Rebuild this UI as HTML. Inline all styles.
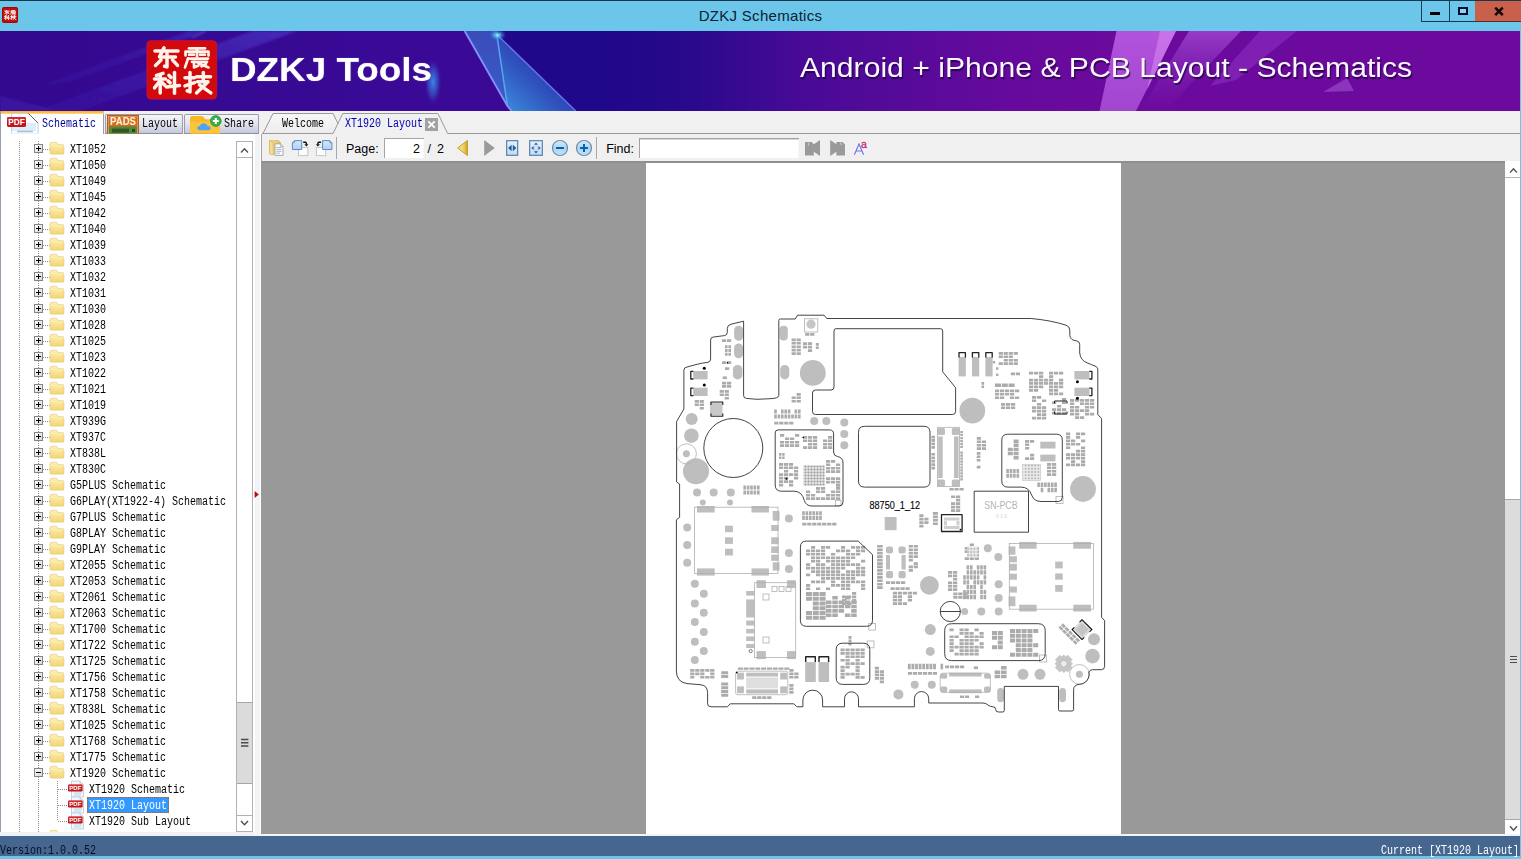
<!DOCTYPE html>
<html>
<head>
<meta charset="utf-8">
<title>DZKJ Schematics</title>
<style>

*{box-sizing:border-box;margin:0;padding:0}
html,body{width:1521px;height:859px;overflow:hidden;background:#6bc6ea;font-family:"Liberation Sans",sans-serif}
#app{position:absolute;left:0;top:0;width:1521px;height:859px;overflow:hidden;background:#6bc6ea}
.abs{position:absolute}
svg{position:absolute;overflow:visible}
/* SimSun-like condensed mono text: 6px per char */
.ss{position:absolute;font-family:"Liberation Mono",monospace;font-size:12px;line-height:16px;height:16px;white-space:pre;transform:scaleX(.8333);transform-origin:0 0;color:#000;margin-top:1.4px}
.ui{position:absolute;font-family:"Liberation Sans",sans-serif;font-size:12.5px;line-height:14px;white-space:pre;color:#000}
#topline{left:0;top:0;width:1521px;height:1px;background:#17384f}
#title{left:0;top:1px;width:1521px;height:30px;background:#6bc6ea}
#title .cap{position:absolute;left:0;width:1521px;top:6px;text-align:center;font-size:15px;line-height:18px;color:#0b2236;letter-spacing:.3px}
#banner{left:0;top:31px;width:1520px;height:80px;overflow:hidden;background:linear-gradient(90deg,#33098f 0,#380a94 20%,#3a0a96 27.6%,#20088a 29%,#1f088a 36%,#22088a 42%,#2b098d 46%,#3c0a93 50%,#470a96 52.6%,#560a9a 59.2%,#640a9c 65.8%,#6b0a9d 72.4%,#6b0a9d 100%)}
#tabrow{left:0;top:111px;width:1520px;height:23px;background:#f0f0f0}
#main{left:0;top:134px;width:1520px;height:702px;background:#f0f0f0}
#status{left:0;top:836px;width:1520px;height:20px;background:#45678f}
.ltab{position:absolute;top:114px;height:20px;border:1px solid #9c9cac;border-bottom:1px solid #8e8e9c;border-radius:2px 2px 0 0;background:linear-gradient(180deg,#f6f6fa 0,#e4e5ee 45%,#c6c9dc 100%)}
#tree{left:0;top:134px;width:254px;height:698px;background:#fff;overflow:hidden;border-left:1px solid #9c9cac}
.sel{position:absolute;background:#3399ff;outline:1px dotted #c06000;outline-offset:-1px}

</style>
</head>
<body>
<div id="app">
<svg width="0" height="0" style="position:absolute"><defs>
<symbol id="zh" viewBox="0 0 58 46" overflow="visible">
 <g fill="none" stroke="#fff4ec" stroke-width="3.5" stroke-linecap="round" stroke-linejoin="round">
  <!-- dong -->
  <g transform="translate(0,0)">
   <path d="M2,3.5H25"/><path d="M11,0.5L6.5,9.5H22.5"/><path d="M14,6V19.5L11.5,18.8"/><path d="M8,12.5L2.5,18"/><path d="M19.5,12.5L24.5,18"/>
  </g>
  <!-- zhen -->
  <g transform="translate(31,0)" stroke-width="2.7">
   <path d="M5,1H21"/><path d="M1.5,8V4.3H24.5V8"/><path d="M13,1V9"/><path d="M5,7.3H10M16,7.3H21"/>
   <path d="M4,11.2H24"/><path d="M4,11.2L1,20"/><path d="M8,14.4H23"/><path d="M10,14.4V20L14.5,18"/><path d="M14,15.5L24.5,20"/><path d="M22,16.4L17.5,19"/>
  </g>
  <!-- ke -->
  <g transform="translate(0,25)">
   <path d="M10,1L3.5,3"/><path d="M1.5,6.5H12.5"/><path d="M7.2,3V20.5"/><path d="M7,8.5L1.5,15.5"/><path d="M8.5,9.5L12,13"/>
   <path d="M16,3L18,5"/><path d="M15,8.5L17.2,10.5"/><path d="M13.5,14.5L26.5,13.2"/><path d="M21.5,0V20.8"/>
  </g>
  <!-- ji -->
  <g transform="translate(31,25)">
   <path d="M1,5.3H10.5"/><path d="M6,0V19.5L3.2,18.5"/><path d="M1,13.5L10.5,10.2"/>
   <path d="M12.5,4.3H26.5"/><path d="M19.3,0V8.5"/><path d="M13.5,9.3H24L12.5,20.5"/><path d="M15.5,12.5L26.8,20.5"/>
  </g>
 </g>
</symbol>
</defs></svg>
<div id="topline" class="abs"></div>
<div id="title" class="abs"><div class="cap">DZKJ Schematics</div></div>
<svg width="0" height="0" style="position:absolute"><defs>
<symbol id="zhs" viewBox="0 0 58 46" overflow="visible">
 <g fill="none" stroke="#ffffff" stroke-width="4.3" stroke-linecap="round" stroke-linejoin="round">
  <!-- dong -->
  <g transform="translate(0,0)">
   <path d="M2,3.5H25"/><path d="M11,0.5L6.5,9.5H22.5"/><path d="M14,6V19.5L11.5,18.8"/><path d="M8,12.5L2.5,18"/><path d="M19.5,12.5L24.5,18"/>
  </g>
  <!-- zhen -->
  <g transform="translate(31,0)" stroke-width="3.4">
   <path d="M5,1H21"/><path d="M1.5,8V4.3H24.5V8"/><path d="M13,1V9"/><path d="M5,7.3H10M16,7.3H21"/>
   <path d="M4,11.2H24"/><path d="M4,11.2L1,20"/><path d="M8,14.4H23"/><path d="M10,14.4V20L14.5,18"/><path d="M14,15.5L24.5,20"/><path d="M22,16.4L17.5,19"/>
  </g>
  <!-- ke -->
  <g transform="translate(0,25)">
   <path d="M10,1L3.5,3"/><path d="M1.5,6.5H12.5"/><path d="M7.2,3V20.5"/><path d="M7,8.5L1.5,15.5"/><path d="M8.5,9.5L12,13"/>
   <path d="M16,3L18,5"/><path d="M15,8.5L17.2,10.5"/><path d="M13.5,14.5L26.5,13.2"/><path d="M21.5,0V20.8"/>
  </g>
  <!-- ji -->
  <g transform="translate(31,25)">
   <path d="M1,5.3H10.5"/><path d="M6,0V19.5L3.2,18.5"/><path d="M1,13.5L10.5,10.2"/>
   <path d="M12.5,4.3H26.5"/><path d="M19.3,0V8.5"/><path d="M13.5,9.3H24L12.5,20.5"/><path d="M15.5,12.5L26.8,20.5"/>
  </g>
 </g>
</symbol>
</defs></svg>
<svg style="left:2px;top:7px" width="17" height="17" viewBox="0 0 17 17">
<rect x="0" y="0" width="16" height="16" rx="2.2" fill="#c20d0d"/>
<rect x="0.5" y="0.5" width="15" height="15" rx="2" fill="none" stroke="#9c0707" stroke-width="1"/>
<use href="#zhs" x="2.2" y="1.9" width="11.8" height="12.2" preserveAspectRatio="none"/>
</svg>
<svg style="left:1421px;top:1px" width="100" height="22" viewBox="0 0 100 22" shape-rendering="crispEdges">
<rect x="54" y="0" width="46" height="21" fill="#c9604c"/>
<rect x="54" y="20" width="46" height="1" fill="#5a2a28"/>
<path d="M0.5,0V20.5H54" fill="none" stroke="#123a55" stroke-width="1"/>
<path d="M28.5,0V20.5" fill="none" stroke="#123a55" stroke-width="1"/>
<rect x="9" y="11" width="10" height="3" fill="#000"/>
<rect x="38" y="7" width="8" height="6" fill="#8fd3ee" stroke="#050d33" stroke-width="2"/>
<g shape-rendering="auto"><path d="M74.2,6.6L81.8,14.2M81.8,6.6L74.2,14.2" stroke="#120606" stroke-width="2.6" fill="none"/></g>
</svg>
<div id="banner" class="abs">
<svg style="left:0;top:0" width="1520" height="80" viewBox="0 31 1520 80">
<defs>
 <linearGradient id="bgA" x1="0" y1="0" x2="0" y2="1"><stop offset="0" stop-color="#4f84e0" stop-opacity=".55"/><stop offset="1" stop-color="#3f7ad8" stop-opacity=".75"/></linearGradient>
 <linearGradient id="bgB" x1="1" y1="0" x2="0" y2="1"><stop offset="0" stop-color="#2a3cb8" stop-opacity=".35"/><stop offset=".6" stop-color="#3468cc" stop-opacity=".8"/><stop offset="1" stop-color="#3d98e4" stop-opacity="1"/></linearGradient>
 <linearGradient id="pgA" x1="0" y1="0" x2="0" y2="1"><stop offset="0" stop-color="#c060e8" stop-opacity=".85"/><stop offset="1" stop-color="#b35ae0" stop-opacity=".75"/></linearGradient>
 <linearGradient id="pgB" x1="0" y1="0" x2="0" y2="1"><stop offset="0" stop-color="#a54bd6" stop-opacity=".75"/><stop offset="1" stop-color="#8a2cc0" stop-opacity="0"/></linearGradient>
 <radialGradient id="glow"><stop offset="0" stop-color="#3b8fe6" stop-opacity=".95"/><stop offset=".55" stop-color="#3570d8" stop-opacity=".5"/><stop offset="1" stop-color="#3a0a96" stop-opacity="0"/></radialGradient>
 <radialGradient id="star"><stop offset="0" stop-color="#a8f4ff" stop-opacity="1"/><stop offset=".35" stop-color="#58c8f0" stop-opacity=".7"/><stop offset="1" stop-color="#2a60c0" stop-opacity="0"/></radialGradient>
 <filter id="bl1"><feGaussianBlur stdDeviation="1.2"/></filter>
 <filter id="bl3"><feGaussianBlur stdDeviation="3"/></filter>
</defs>
<!-- faint streaks upper-left -->
<defs><linearGradient id="stk" x1="1" y1="0" x2="0" y2="1"><stop offset="0" stop-color="#4a34c4" stop-opacity=".75"/><stop offset=".45" stop-color="#4226b6" stop-opacity=".5"/><stop offset="1" stop-color="#3c1cac" stop-opacity=".35"/></linearGradient></defs>
<g filter="url(#bl1)">
 <path d="M252,31H297L81,111H36Z" fill="url(#stk)"/>
 <path d="M189,31H208L70,82L40,86Z" fill="url(#stk)" opacity=".7"/>
 <path d="M192,38L206,31" stroke="#6a5ce0" stroke-width="1.2" opacity=".7"/>
 <path d="M0,96L60,111H0Z" fill="#3f20b0" opacity=".5"/>
</g>
<!-- left shard -->
<path d="M420,31H464.7L511.6,111H420Z" fill="#3a0a96"/>
<path d="M464.5,31H497L507.5,106Z" fill="url(#bgA)"/>
<path d="M497,34.5L576,111H512L507.5,106Z" fill="url(#bgB)"/>
<path d="M464.7,31L507.4,105.9L511.6,111" stroke="#8092fa" stroke-width="1.9" fill="none"/>
<path d="M496.8,34.5L507.4,105.9" stroke="#5da4f0" stroke-width="1.5" fill="none"/>
<path d="M496.8,34.5L575.8,111" stroke="#6670ea" stroke-width="1.5" fill="none"/>
<ellipse cx="497.5" cy="35" rx="9" ry="6" fill="url(#star)"/>
<ellipse cx="433" cy="82" rx="9" ry="24" fill="url(#glow)"/>
<!-- right purple shards -->
<path d="M1116.5,31H1176L1136,111H1099.5Z" fill="url(#pgA)"/>
<path d="M1160,31L1176,31L1147,90Z" fill="#d98af4" opacity=".55"/>
<path d="M1189,31H1241L1165,111H1140Z" fill="url(#pgB)"/>
<path d="M1260,31H1297L1236,80L1210,86Z" fill="#9a3ccc" opacity=".45"/>
<path d="M1323,92L1347,78L1354,91Z" fill="#a050d0" opacity=".6"/>
</svg>
<svg style="left:146px;top:9px" width="72" height="60" viewBox="0 0 72 60">
<rect x=".5" y=".3" width="70.6" height="59.2" rx="4.5" fill="#d30a0c"/>
<rect x="1" y=".8" width="69.6" height="58.2" rx="4" fill="none" stroke="#b0106a" stroke-opacity=".55" stroke-width="1"/>
<use href="#zh" x="7" y="7.4" width="58" height="46"/>
</svg>
<div class="abs" style="left:230px;top:19.5px;font-size:33.5px;line-height:38px;font-weight:bold;color:#fff;white-space:pre;transform:scaleX(1.1);transform-origin:0 0;text-shadow:0 0 1px rgba(255,255,255,.5)">DZKJ Tools</div>
<div class="abs" style="left:799.5px;top:22px;font-size:27px;line-height:31px;color:#fbf7ff;white-space:pre;transform:scaleX(1.116);transform-origin:0 0;text-shadow:1px 2px 1px rgba(30,0,60,.75)">Android + iPhone &amp; PCB Layout - Schematics</div>
</div>
<div id="tabrow" class="abs"></div>
<div class="abs" style="left:0;top:111px;width:104px;height:23px;background:#fff;border-left:1px solid #9c9cac;border-right:1px solid #9c9cac"></div>
<div class="abs" style="left:1px;top:111px;width:103px;height:3px;background:linear-gradient(180deg,#f7b42c,#fbc24a 60%,#fde3a6)"></div>
<div class="ltab" style="left:105px;width:78px"></div>
<div class="ltab" style="left:184px;width:75px"></div>
<div class="ss" style="left:41.5px;top:115px;color:#00009c;">Schematic</div>
<div class="ss" style="left:142px;top:115px;color:#000;">Layout</div>
<div class="ss" style="left:223.5px;top:115px;color:#000;">Share</div>
<svg style="left:0;top:0" width="1521" height="140" viewBox="0 0 1521 140">
<defs><linearGradient id="wtab" x1="0" y1="0" x2="0" y2="1"><stop offset="0" stop-color="#f7f7f7"/><stop offset="1" stop-color="#ececec"/></linearGradient></defs>
<path d="M263,133.5L273,113.5H333L338,123.5L333,133.5Z" fill="url(#wtab)"/>
<path d="M262,133.5H333" stroke="#9a9a9a" fill="none"/>
<path d="M263,133.5L273,113.5H333L338,123.5" stroke="#9a9a9a" fill="none"/>
<path d="M333,133.5L342.8,113.5H438L447.6,133.5H1520" stroke="#9a9a9a" fill="none"/>
<rect x="425" y="118" width="13" height="13" fill="#a2a2a2"/>
<path d="M428.3,121.3L434.7,127.7M434.7,121.3L428.3,127.7" stroke="#fff" stroke-width="1.8" fill="none"/>
</svg>
<div class="ss" style="left:282px;top:115px;color:#000;">Welcome</div>
<div class="ss" style="left:345px;top:115px;color:#0000b4;">XT1920 Layout</div>
<div id="main" class="abs"></div>
<div class="abs" style="left:254px;top:134px;width:7px;height:702px;background:#f1f3f5;border-left:1px solid #fff;border-right:1px solid #fff"></div>
<svg style="left:254px;top:490px" width="6" height="9" viewBox="0 0 6 9"><path d="M0.6,1L4.8,4.5L0.6,8Z" fill="#b01212"/></svg>
<div class="abs" style="left:261px;top:134px;width:1px;height:27px;background:#a3a3a3"></div>
<div class="abs" style="left:261px;top:161px;width:1244px;height:673px;background:#999"></div>
<div class="abs" style="left:261px;top:161px;width:1244px;height:2px;background:#8f8f8f"></div>
<div class="abs" style="left:646px;top:163px;width:475px;height:671px;background:#fff"></div>
<div class="abs" style="left:1505px;top:161px;width:15px;height:673px;background:#fff"></div>
<div class="abs" style="left:1505px;top:177px;width:15px;height:1px;background:#b4b4b4"></div>
<div class="abs" style="left:1505px;top:499px;width:15px;height:321px;background:#dcdcdc;border-top:1px solid #a8a8a8;border-bottom:1px solid #a8a8a8"></div>
<svg style="left:1505px;top:161px" width="15" height="673" viewBox="0 0 15 673">
<path d="M5,11.6L8.5,7.8L12,11.6" stroke="#505050" stroke-width="1.4" fill="none"/>
<path d="M5,665.3L8.5,669.1L12,665.3" stroke="#505050" stroke-width="1.4" fill="none"/>
<path d="M5,495.5H12M5,498.5H12M5,501.5H12" stroke="#4e4e4e" stroke-width="1" fill="none" shape-rendering="crispEdges"/>
</svg>
<div class="abs" style="left:254px;top:834px;width:1266px;height:2px;background:#f4f4f4"></div>
<div class="abs" style="left:0;top:832px;width:254px;height:4px;background:#eef1f5"></div>
<div id="status" class="abs"></div>
<div class="ss" style="left:0px;top:842px;color:#070c26;">Version:1.0.0.52</div>
<div class="ss" style="left:1381px;top:842px;color:#fff;">Current [XT1920 Layout]</div>
<div id="tree" class="abs"></div>
<div class="sel" style="left:87px;top:797px;width:82px;height:16px"></div>
<svg style="left:0;top:0" width="262" height="836" viewBox="0 0 262 836">
<defs><linearGradient id="fg1" x1="0" y1="0" x2="0" y2="1"><stop offset="0" stop-color="#fdf3c6"/><stop offset=".35" stop-color="#f9e598"/><stop offset="1" stop-color="#f4d67a"/></linearGradient><linearGradient id="bx" x1="0" y1="0" x2="1" y2="1"><stop offset="0" stop-color="#fff"/><stop offset="1" stop-color="#d6d6d6"/></linearGradient><clipPath id="tclip"><rect x="1" y="134" width="235" height="698"/></clipPath>
<symbol id="fold" viewBox="0 0 15 13" overflow="visible">
 <path d="M.6,2.2Q.6,.7 2,.7H6.3Q7.4,.7 7.9,1.7L8.6,3H13.2Q14.3,3 14.3,4.2V11.3Q14.3,12.4 13.2,12.4H1.7Q.6,12.4 .6,11.3Z" fill="url(#fg1)" stroke="#e3c56a" stroke-width=".7"/>
 <path d="M.9,4.3H14" stroke="#fff6c8" stroke-width=".8" opacity=".9"/>
</symbol>
<symbol id="pdfi" viewBox="0 0 17 17" overflow="visible">
 <path d="M3.5,.5H12L15.5,4V16.5H3.5Z" fill="#f3f8fd" stroke="#b9c7d6" stroke-width=".8"/>
 <path d="M12,.5V4H15.5" fill="#dfe9f3" stroke="#b9c7d6" stroke-width=".7"/>
 <path d="M6,10.5H14M6,12.5H14M6,14.5H13" stroke="#b5d4ea" stroke-width="1"/>
 <rect x="0" y="4" width="14.6" height="7" rx="1.2" fill="#c8161d"/>
 <rect x="0" y="4" width="14.6" height="2.6" rx="1.2" fill="#e2383e" opacity=".55"/>
 <text x="7.3" y="9.8" font-family="Liberation Sans" font-weight="bold" font-size="6.2" text-anchor="middle" fill="#fff" textLength="12" lengthAdjust="spacingAndGlyphs">PDF</text>
</symbol>
</defs>
<g clip-path="url(#tclip)">
<path d="M19.5,141V832" stroke="#8c8c8c" stroke-width="1" stroke-dasharray="1,1" fill="none" shape-rendering="crispEdges"/>
<path d="M38.5,141V832" stroke="#8c8c8c" stroke-width="1" stroke-dasharray="1,1" fill="none" shape-rendering="crispEdges"/>
<path d="M43,149.5H50" stroke="#8c8c8c" stroke-width="1" stroke-dasharray="1,1" fill="none" shape-rendering="crispEdges"/>
<rect x="34.5" y="144.5" width="8" height="8" fill="url(#bx)" stroke="#848484" stroke-width="1" shape-rendering="crispEdges"/>
<path d="M36,148.5H41M38.5,146V151" stroke="#000" stroke-width="1" shape-rendering="crispEdges"/>
<use href="#fold" x="49.5" y="141.7" width="15" height="13"/>
<path d="M43,165.5H50" stroke="#8c8c8c" stroke-width="1" stroke-dasharray="1,1" fill="none" shape-rendering="crispEdges"/>
<rect x="34.5" y="160.5" width="8" height="8" fill="url(#bx)" stroke="#848484" stroke-width="1" shape-rendering="crispEdges"/>
<path d="M36,164.5H41M38.5,162V167" stroke="#000" stroke-width="1" shape-rendering="crispEdges"/>
<use href="#fold" x="49.5" y="157.7" width="15" height="13"/>
<path d="M43,181.5H50" stroke="#8c8c8c" stroke-width="1" stroke-dasharray="1,1" fill="none" shape-rendering="crispEdges"/>
<rect x="34.5" y="176.5" width="8" height="8" fill="url(#bx)" stroke="#848484" stroke-width="1" shape-rendering="crispEdges"/>
<path d="M36,180.5H41M38.5,178V183" stroke="#000" stroke-width="1" shape-rendering="crispEdges"/>
<use href="#fold" x="49.5" y="173.7" width="15" height="13"/>
<path d="M43,197.5H50" stroke="#8c8c8c" stroke-width="1" stroke-dasharray="1,1" fill="none" shape-rendering="crispEdges"/>
<rect x="34.5" y="192.5" width="8" height="8" fill="url(#bx)" stroke="#848484" stroke-width="1" shape-rendering="crispEdges"/>
<path d="M36,196.5H41M38.5,194V199" stroke="#000" stroke-width="1" shape-rendering="crispEdges"/>
<use href="#fold" x="49.5" y="189.7" width="15" height="13"/>
<path d="M43,213.5H50" stroke="#8c8c8c" stroke-width="1" stroke-dasharray="1,1" fill="none" shape-rendering="crispEdges"/>
<rect x="34.5" y="208.5" width="8" height="8" fill="url(#bx)" stroke="#848484" stroke-width="1" shape-rendering="crispEdges"/>
<path d="M36,212.5H41M38.5,210V215" stroke="#000" stroke-width="1" shape-rendering="crispEdges"/>
<use href="#fold" x="49.5" y="205.7" width="15" height="13"/>
<path d="M43,229.5H50" stroke="#8c8c8c" stroke-width="1" stroke-dasharray="1,1" fill="none" shape-rendering="crispEdges"/>
<rect x="34.5" y="224.5" width="8" height="8" fill="url(#bx)" stroke="#848484" stroke-width="1" shape-rendering="crispEdges"/>
<path d="M36,228.5H41M38.5,226V231" stroke="#000" stroke-width="1" shape-rendering="crispEdges"/>
<use href="#fold" x="49.5" y="221.7" width="15" height="13"/>
<path d="M43,245.5H50" stroke="#8c8c8c" stroke-width="1" stroke-dasharray="1,1" fill="none" shape-rendering="crispEdges"/>
<rect x="34.5" y="240.5" width="8" height="8" fill="url(#bx)" stroke="#848484" stroke-width="1" shape-rendering="crispEdges"/>
<path d="M36,244.5H41M38.5,242V247" stroke="#000" stroke-width="1" shape-rendering="crispEdges"/>
<use href="#fold" x="49.5" y="237.7" width="15" height="13"/>
<path d="M43,261.5H50" stroke="#8c8c8c" stroke-width="1" stroke-dasharray="1,1" fill="none" shape-rendering="crispEdges"/>
<rect x="34.5" y="256.5" width="8" height="8" fill="url(#bx)" stroke="#848484" stroke-width="1" shape-rendering="crispEdges"/>
<path d="M36,260.5H41M38.5,258V263" stroke="#000" stroke-width="1" shape-rendering="crispEdges"/>
<use href="#fold" x="49.5" y="253.7" width="15" height="13"/>
<path d="M43,277.5H50" stroke="#8c8c8c" stroke-width="1" stroke-dasharray="1,1" fill="none" shape-rendering="crispEdges"/>
<rect x="34.5" y="272.5" width="8" height="8" fill="url(#bx)" stroke="#848484" stroke-width="1" shape-rendering="crispEdges"/>
<path d="M36,276.5H41M38.5,274V279" stroke="#000" stroke-width="1" shape-rendering="crispEdges"/>
<use href="#fold" x="49.5" y="269.7" width="15" height="13"/>
<path d="M43,293.5H50" stroke="#8c8c8c" stroke-width="1" stroke-dasharray="1,1" fill="none" shape-rendering="crispEdges"/>
<rect x="34.5" y="288.5" width="8" height="8" fill="url(#bx)" stroke="#848484" stroke-width="1" shape-rendering="crispEdges"/>
<path d="M36,292.5H41M38.5,290V295" stroke="#000" stroke-width="1" shape-rendering="crispEdges"/>
<use href="#fold" x="49.5" y="285.7" width="15" height="13"/>
<path d="M43,309.5H50" stroke="#8c8c8c" stroke-width="1" stroke-dasharray="1,1" fill="none" shape-rendering="crispEdges"/>
<rect x="34.5" y="304.5" width="8" height="8" fill="url(#bx)" stroke="#848484" stroke-width="1" shape-rendering="crispEdges"/>
<path d="M36,308.5H41M38.5,306V311" stroke="#000" stroke-width="1" shape-rendering="crispEdges"/>
<use href="#fold" x="49.5" y="301.7" width="15" height="13"/>
<path d="M43,325.5H50" stroke="#8c8c8c" stroke-width="1" stroke-dasharray="1,1" fill="none" shape-rendering="crispEdges"/>
<rect x="34.5" y="320.5" width="8" height="8" fill="url(#bx)" stroke="#848484" stroke-width="1" shape-rendering="crispEdges"/>
<path d="M36,324.5H41M38.5,322V327" stroke="#000" stroke-width="1" shape-rendering="crispEdges"/>
<use href="#fold" x="49.5" y="317.7" width="15" height="13"/>
<path d="M43,341.5H50" stroke="#8c8c8c" stroke-width="1" stroke-dasharray="1,1" fill="none" shape-rendering="crispEdges"/>
<rect x="34.5" y="336.5" width="8" height="8" fill="url(#bx)" stroke="#848484" stroke-width="1" shape-rendering="crispEdges"/>
<path d="M36,340.5H41M38.5,338V343" stroke="#000" stroke-width="1" shape-rendering="crispEdges"/>
<use href="#fold" x="49.5" y="333.7" width="15" height="13"/>
<path d="M43,357.5H50" stroke="#8c8c8c" stroke-width="1" stroke-dasharray="1,1" fill="none" shape-rendering="crispEdges"/>
<rect x="34.5" y="352.5" width="8" height="8" fill="url(#bx)" stroke="#848484" stroke-width="1" shape-rendering="crispEdges"/>
<path d="M36,356.5H41M38.5,354V359" stroke="#000" stroke-width="1" shape-rendering="crispEdges"/>
<use href="#fold" x="49.5" y="349.7" width="15" height="13"/>
<path d="M43,373.5H50" stroke="#8c8c8c" stroke-width="1" stroke-dasharray="1,1" fill="none" shape-rendering="crispEdges"/>
<rect x="34.5" y="368.5" width="8" height="8" fill="url(#bx)" stroke="#848484" stroke-width="1" shape-rendering="crispEdges"/>
<path d="M36,372.5H41M38.5,370V375" stroke="#000" stroke-width="1" shape-rendering="crispEdges"/>
<use href="#fold" x="49.5" y="365.7" width="15" height="13"/>
<path d="M43,389.5H50" stroke="#8c8c8c" stroke-width="1" stroke-dasharray="1,1" fill="none" shape-rendering="crispEdges"/>
<rect x="34.5" y="384.5" width="8" height="8" fill="url(#bx)" stroke="#848484" stroke-width="1" shape-rendering="crispEdges"/>
<path d="M36,388.5H41M38.5,386V391" stroke="#000" stroke-width="1" shape-rendering="crispEdges"/>
<use href="#fold" x="49.5" y="381.7" width="15" height="13"/>
<path d="M43,405.5H50" stroke="#8c8c8c" stroke-width="1" stroke-dasharray="1,1" fill="none" shape-rendering="crispEdges"/>
<rect x="34.5" y="400.5" width="8" height="8" fill="url(#bx)" stroke="#848484" stroke-width="1" shape-rendering="crispEdges"/>
<path d="M36,404.5H41M38.5,402V407" stroke="#000" stroke-width="1" shape-rendering="crispEdges"/>
<use href="#fold" x="49.5" y="397.7" width="15" height="13"/>
<path d="M43,421.5H50" stroke="#8c8c8c" stroke-width="1" stroke-dasharray="1,1" fill="none" shape-rendering="crispEdges"/>
<rect x="34.5" y="416.5" width="8" height="8" fill="url(#bx)" stroke="#848484" stroke-width="1" shape-rendering="crispEdges"/>
<path d="M36,420.5H41M38.5,418V423" stroke="#000" stroke-width="1" shape-rendering="crispEdges"/>
<use href="#fold" x="49.5" y="413.7" width="15" height="13"/>
<path d="M43,437.5H50" stroke="#8c8c8c" stroke-width="1" stroke-dasharray="1,1" fill="none" shape-rendering="crispEdges"/>
<rect x="34.5" y="432.5" width="8" height="8" fill="url(#bx)" stroke="#848484" stroke-width="1" shape-rendering="crispEdges"/>
<path d="M36,436.5H41M38.5,434V439" stroke="#000" stroke-width="1" shape-rendering="crispEdges"/>
<use href="#fold" x="49.5" y="429.7" width="15" height="13"/>
<path d="M43,453.5H50" stroke="#8c8c8c" stroke-width="1" stroke-dasharray="1,1" fill="none" shape-rendering="crispEdges"/>
<rect x="34.5" y="448.5" width="8" height="8" fill="url(#bx)" stroke="#848484" stroke-width="1" shape-rendering="crispEdges"/>
<path d="M36,452.5H41M38.5,450V455" stroke="#000" stroke-width="1" shape-rendering="crispEdges"/>
<use href="#fold" x="49.5" y="445.7" width="15" height="13"/>
<path d="M43,469.5H50" stroke="#8c8c8c" stroke-width="1" stroke-dasharray="1,1" fill="none" shape-rendering="crispEdges"/>
<rect x="34.5" y="464.5" width="8" height="8" fill="url(#bx)" stroke="#848484" stroke-width="1" shape-rendering="crispEdges"/>
<path d="M36,468.5H41M38.5,466V471" stroke="#000" stroke-width="1" shape-rendering="crispEdges"/>
<use href="#fold" x="49.5" y="461.7" width="15" height="13"/>
<path d="M43,485.5H50" stroke="#8c8c8c" stroke-width="1" stroke-dasharray="1,1" fill="none" shape-rendering="crispEdges"/>
<rect x="34.5" y="480.5" width="8" height="8" fill="url(#bx)" stroke="#848484" stroke-width="1" shape-rendering="crispEdges"/>
<path d="M36,484.5H41M38.5,482V487" stroke="#000" stroke-width="1" shape-rendering="crispEdges"/>
<use href="#fold" x="49.5" y="477.7" width="15" height="13"/>
<path d="M43,501.5H50" stroke="#8c8c8c" stroke-width="1" stroke-dasharray="1,1" fill="none" shape-rendering="crispEdges"/>
<rect x="34.5" y="496.5" width="8" height="8" fill="url(#bx)" stroke="#848484" stroke-width="1" shape-rendering="crispEdges"/>
<path d="M36,500.5H41M38.5,498V503" stroke="#000" stroke-width="1" shape-rendering="crispEdges"/>
<use href="#fold" x="49.5" y="493.7" width="15" height="13"/>
<path d="M43,517.5H50" stroke="#8c8c8c" stroke-width="1" stroke-dasharray="1,1" fill="none" shape-rendering="crispEdges"/>
<rect x="34.5" y="512.5" width="8" height="8" fill="url(#bx)" stroke="#848484" stroke-width="1" shape-rendering="crispEdges"/>
<path d="M36,516.5H41M38.5,514V519" stroke="#000" stroke-width="1" shape-rendering="crispEdges"/>
<use href="#fold" x="49.5" y="509.7" width="15" height="13"/>
<path d="M43,533.5H50" stroke="#8c8c8c" stroke-width="1" stroke-dasharray="1,1" fill="none" shape-rendering="crispEdges"/>
<rect x="34.5" y="528.5" width="8" height="8" fill="url(#bx)" stroke="#848484" stroke-width="1" shape-rendering="crispEdges"/>
<path d="M36,532.5H41M38.5,530V535" stroke="#000" stroke-width="1" shape-rendering="crispEdges"/>
<use href="#fold" x="49.5" y="525.7" width="15" height="13"/>
<path d="M43,549.5H50" stroke="#8c8c8c" stroke-width="1" stroke-dasharray="1,1" fill="none" shape-rendering="crispEdges"/>
<rect x="34.5" y="544.5" width="8" height="8" fill="url(#bx)" stroke="#848484" stroke-width="1" shape-rendering="crispEdges"/>
<path d="M36,548.5H41M38.5,546V551" stroke="#000" stroke-width="1" shape-rendering="crispEdges"/>
<use href="#fold" x="49.5" y="541.7" width="15" height="13"/>
<path d="M43,565.5H50" stroke="#8c8c8c" stroke-width="1" stroke-dasharray="1,1" fill="none" shape-rendering="crispEdges"/>
<rect x="34.5" y="560.5" width="8" height="8" fill="url(#bx)" stroke="#848484" stroke-width="1" shape-rendering="crispEdges"/>
<path d="M36,564.5H41M38.5,562V567" stroke="#000" stroke-width="1" shape-rendering="crispEdges"/>
<use href="#fold" x="49.5" y="557.7" width="15" height="13"/>
<path d="M43,581.5H50" stroke="#8c8c8c" stroke-width="1" stroke-dasharray="1,1" fill="none" shape-rendering="crispEdges"/>
<rect x="34.5" y="576.5" width="8" height="8" fill="url(#bx)" stroke="#848484" stroke-width="1" shape-rendering="crispEdges"/>
<path d="M36,580.5H41M38.5,578V583" stroke="#000" stroke-width="1" shape-rendering="crispEdges"/>
<use href="#fold" x="49.5" y="573.7" width="15" height="13"/>
<path d="M43,597.5H50" stroke="#8c8c8c" stroke-width="1" stroke-dasharray="1,1" fill="none" shape-rendering="crispEdges"/>
<rect x="34.5" y="592.5" width="8" height="8" fill="url(#bx)" stroke="#848484" stroke-width="1" shape-rendering="crispEdges"/>
<path d="M36,596.5H41M38.5,594V599" stroke="#000" stroke-width="1" shape-rendering="crispEdges"/>
<use href="#fold" x="49.5" y="589.7" width="15" height="13"/>
<path d="M43,613.5H50" stroke="#8c8c8c" stroke-width="1" stroke-dasharray="1,1" fill="none" shape-rendering="crispEdges"/>
<rect x="34.5" y="608.5" width="8" height="8" fill="url(#bx)" stroke="#848484" stroke-width="1" shape-rendering="crispEdges"/>
<path d="M36,612.5H41M38.5,610V615" stroke="#000" stroke-width="1" shape-rendering="crispEdges"/>
<use href="#fold" x="49.5" y="605.7" width="15" height="13"/>
<path d="M43,629.5H50" stroke="#8c8c8c" stroke-width="1" stroke-dasharray="1,1" fill="none" shape-rendering="crispEdges"/>
<rect x="34.5" y="624.5" width="8" height="8" fill="url(#bx)" stroke="#848484" stroke-width="1" shape-rendering="crispEdges"/>
<path d="M36,628.5H41M38.5,626V631" stroke="#000" stroke-width="1" shape-rendering="crispEdges"/>
<use href="#fold" x="49.5" y="621.7" width="15" height="13"/>
<path d="M43,645.5H50" stroke="#8c8c8c" stroke-width="1" stroke-dasharray="1,1" fill="none" shape-rendering="crispEdges"/>
<rect x="34.5" y="640.5" width="8" height="8" fill="url(#bx)" stroke="#848484" stroke-width="1" shape-rendering="crispEdges"/>
<path d="M36,644.5H41M38.5,642V647" stroke="#000" stroke-width="1" shape-rendering="crispEdges"/>
<use href="#fold" x="49.5" y="637.7" width="15" height="13"/>
<path d="M43,661.5H50" stroke="#8c8c8c" stroke-width="1" stroke-dasharray="1,1" fill="none" shape-rendering="crispEdges"/>
<rect x="34.5" y="656.5" width="8" height="8" fill="url(#bx)" stroke="#848484" stroke-width="1" shape-rendering="crispEdges"/>
<path d="M36,660.5H41M38.5,658V663" stroke="#000" stroke-width="1" shape-rendering="crispEdges"/>
<use href="#fold" x="49.5" y="653.7" width="15" height="13"/>
<path d="M43,677.5H50" stroke="#8c8c8c" stroke-width="1" stroke-dasharray="1,1" fill="none" shape-rendering="crispEdges"/>
<rect x="34.5" y="672.5" width="8" height="8" fill="url(#bx)" stroke="#848484" stroke-width="1" shape-rendering="crispEdges"/>
<path d="M36,676.5H41M38.5,674V679" stroke="#000" stroke-width="1" shape-rendering="crispEdges"/>
<use href="#fold" x="49.5" y="669.7" width="15" height="13"/>
<path d="M43,693.5H50" stroke="#8c8c8c" stroke-width="1" stroke-dasharray="1,1" fill="none" shape-rendering="crispEdges"/>
<rect x="34.5" y="688.5" width="8" height="8" fill="url(#bx)" stroke="#848484" stroke-width="1" shape-rendering="crispEdges"/>
<path d="M36,692.5H41M38.5,690V695" stroke="#000" stroke-width="1" shape-rendering="crispEdges"/>
<use href="#fold" x="49.5" y="685.7" width="15" height="13"/>
<path d="M43,709.5H50" stroke="#8c8c8c" stroke-width="1" stroke-dasharray="1,1" fill="none" shape-rendering="crispEdges"/>
<rect x="34.5" y="704.5" width="8" height="8" fill="url(#bx)" stroke="#848484" stroke-width="1" shape-rendering="crispEdges"/>
<path d="M36,708.5H41M38.5,706V711" stroke="#000" stroke-width="1" shape-rendering="crispEdges"/>
<use href="#fold" x="49.5" y="701.7" width="15" height="13"/>
<path d="M43,725.5H50" stroke="#8c8c8c" stroke-width="1" stroke-dasharray="1,1" fill="none" shape-rendering="crispEdges"/>
<rect x="34.5" y="720.5" width="8" height="8" fill="url(#bx)" stroke="#848484" stroke-width="1" shape-rendering="crispEdges"/>
<path d="M36,724.5H41M38.5,722V727" stroke="#000" stroke-width="1" shape-rendering="crispEdges"/>
<use href="#fold" x="49.5" y="717.7" width="15" height="13"/>
<path d="M43,741.5H50" stroke="#8c8c8c" stroke-width="1" stroke-dasharray="1,1" fill="none" shape-rendering="crispEdges"/>
<rect x="34.5" y="736.5" width="8" height="8" fill="url(#bx)" stroke="#848484" stroke-width="1" shape-rendering="crispEdges"/>
<path d="M36,740.5H41M38.5,738V743" stroke="#000" stroke-width="1" shape-rendering="crispEdges"/>
<use href="#fold" x="49.5" y="733.7" width="15" height="13"/>
<path d="M43,757.5H50" stroke="#8c8c8c" stroke-width="1" stroke-dasharray="1,1" fill="none" shape-rendering="crispEdges"/>
<rect x="34.5" y="752.5" width="8" height="8" fill="url(#bx)" stroke="#848484" stroke-width="1" shape-rendering="crispEdges"/>
<path d="M36,756.5H41M38.5,754V759" stroke="#000" stroke-width="1" shape-rendering="crispEdges"/>
<use href="#fold" x="49.5" y="749.7" width="15" height="13"/>
<path d="M43,773.5H50" stroke="#8c8c8c" stroke-width="1" stroke-dasharray="1,1" fill="none" shape-rendering="crispEdges"/>
<rect x="34.5" y="768.5" width="8" height="8" fill="url(#bx)" stroke="#848484" stroke-width="1" shape-rendering="crispEdges"/>
<path d="M36,772.5H41" stroke="#000" stroke-width="1" shape-rendering="crispEdges"/>
<use href="#fold" x="49.5" y="765.7" width="15" height="13"/>
<use href="#fold" x="49.5" y="829.7" width="15" height="13"/>
<path d="M57.5,781V821" stroke="#8c8c8c" stroke-width="1" stroke-dasharray="1,1" fill="none" shape-rendering="crispEdges"/>
<path d="M58,789.5H68" stroke="#8c8c8c" stroke-width="1" stroke-dasharray="1,1" fill="none" shape-rendering="crispEdges"/>
<use href="#pdfi" x="68" y="780.5" width="17" height="17"/>
<path d="M58,805.5H68" stroke="#8c8c8c" stroke-width="1" stroke-dasharray="1,1" fill="none" shape-rendering="crispEdges"/>
<use href="#pdfi" x="68" y="796.5" width="17" height="17"/>
<path d="M58,821.5H68" stroke="#8c8c8c" stroke-width="1" stroke-dasharray="1,1" fill="none" shape-rendering="crispEdges"/>
<use href="#pdfi" x="68" y="812.5" width="17" height="17"/>
</g>
<rect x="236.5" y="141.5" width="16" height="690" fill="#fff" stroke="#b2b2b2" stroke-width="1" shape-rendering="crispEdges"/>
<path d="M236,157.5H253M236,815.5H253" stroke="#b2b2b2" stroke-width="1" shape-rendering="crispEdges"/>
<rect x="237" y="702" width="15" height="82" fill="#dbdbdb"/>
<path d="M237,702.5H252M237,783.5H252" stroke="#a6a6a6" stroke-width="1" shape-rendering="crispEdges"/>
<path d="M241,739.6H248.4M241,742.8H248.4M241,746H248.4" stroke="#4a4a4a" stroke-width="1.5"/>
<path d="M241,152.5L244.5,148.7L248,152.5" stroke="#505050" stroke-width="1.4" fill="none"/>
<path d="M241,821L244.5,824.8L248,821" stroke="#505050" stroke-width="1.4" fill="none"/>
</svg>
<div class="ss" style="left:70px;top:141px;color:#000">XT1052</div>
<div class="ss" style="left:70px;top:157px;color:#000">XT1050</div>
<div class="ss" style="left:70px;top:173px;color:#000">XT1049</div>
<div class="ss" style="left:70px;top:189px;color:#000">XT1045</div>
<div class="ss" style="left:70px;top:205px;color:#000">XT1042</div>
<div class="ss" style="left:70px;top:221px;color:#000">XT1040</div>
<div class="ss" style="left:70px;top:237px;color:#000">XT1039</div>
<div class="ss" style="left:70px;top:253px;color:#000">XT1033</div>
<div class="ss" style="left:70px;top:269px;color:#000">XT1032</div>
<div class="ss" style="left:70px;top:285px;color:#000">XT1031</div>
<div class="ss" style="left:70px;top:301px;color:#000">XT1030</div>
<div class="ss" style="left:70px;top:317px;color:#000">XT1028</div>
<div class="ss" style="left:70px;top:333px;color:#000">XT1025</div>
<div class="ss" style="left:70px;top:349px;color:#000">XT1023</div>
<div class="ss" style="left:70px;top:365px;color:#000">XT1022</div>
<div class="ss" style="left:70px;top:381px;color:#000">XT1021</div>
<div class="ss" style="left:70px;top:397px;color:#000">XT1019</div>
<div class="ss" style="left:70px;top:413px;color:#000">XT939G</div>
<div class="ss" style="left:70px;top:429px;color:#000">XT937C</div>
<div class="ss" style="left:70px;top:445px;color:#000">XT838L</div>
<div class="ss" style="left:70px;top:461px;color:#000">XT830C</div>
<div class="ss" style="left:70px;top:477px;color:#000">G5PLUS Schematic</div>
<div class="ss" style="left:70px;top:493px;color:#000">G6PLAY(XT1922-4) Schematic</div>
<div class="ss" style="left:70px;top:509px;color:#000">G7PLUS Schematic</div>
<div class="ss" style="left:70px;top:525px;color:#000">G8PLAY Schematic</div>
<div class="ss" style="left:70px;top:541px;color:#000">G9PLAY Schematic</div>
<div class="ss" style="left:70px;top:557px;color:#000">XT2055 Schematic</div>
<div class="ss" style="left:70px;top:573px;color:#000">XT2053 Schematic</div>
<div class="ss" style="left:70px;top:589px;color:#000">XT2061 Schematic</div>
<div class="ss" style="left:70px;top:605px;color:#000">XT2063 Schematic</div>
<div class="ss" style="left:70px;top:621px;color:#000">XT1700 Schematic</div>
<div class="ss" style="left:70px;top:637px;color:#000">XT1722 Schematic</div>
<div class="ss" style="left:70px;top:653px;color:#000">XT1725 Schematic</div>
<div class="ss" style="left:70px;top:669px;color:#000">XT1756 Schematic</div>
<div class="ss" style="left:70px;top:685px;color:#000">XT1758 Schematic</div>
<div class="ss" style="left:70px;top:701px;color:#000">XT838L Schematic</div>
<div class="ss" style="left:70px;top:717px;color:#000">XT1025 Schematic</div>
<div class="ss" style="left:70px;top:733px;color:#000">XT1768 Schematic</div>
<div class="ss" style="left:70px;top:749px;color:#000">XT1775 Schematic</div>
<div class="ss" style="left:70px;top:765px;color:#000">XT1920 Schematic</div>
<div class="ss" style="left:89px;top:781px;color:#000">XT1920 Schematic</div>
<div class="ss" style="left:89px;top:797px;color:#fff">XT1920 Layout</div>
<div class="ss" style="left:89px;top:813px;color:#000">XT1920 Sub Layout</div>
<svg style="left:0;top:111px" width="262" height="23" viewBox="0 111 262 23">
<defs><clipPath id="tabclip"><rect x="0" y="111" width="262" height="22.6"/></clipPath></defs>
<g clip-path="url(#tabclip)">
 <!-- pdf page -->
 <path d="M11.5,113.5H28.5L38,123V134H11.5Z" fill="#fbfdff" stroke="#c3ccd8" stroke-width=".9"/>
 <path d="M28.5,113.5L38,123" stroke="#444" stroke-width=".8"/>
 <path d="M12,123H36V131H12Z" fill="#cfe6f6" opacity=".7"/>
 <path d="M17,131.5H33" stroke="#a9bccb" stroke-width="1.3"/>
 <rect x="7" y="117" width="19" height="10" rx="1.4" fill="#c3141b"/>
 <rect x="7" y="117" width="19" height="4" rx="1.4" fill="#e04048" opacity=".5"/>
 <text x="16.5" y="125.2" font-family="Liberation Sans" font-weight="bold" font-size="8.4" text-anchor="middle" fill="#fff" textLength="16.5" lengthAdjust="spacingAndGlyphs">PDF</text>
 <!-- PADS -->
 <rect x="107.5" y="115.5" width="31" height="19" fill="#d2691c" stroke="#b85a14" stroke-width="1"/>
 <rect x="108.5" y="116.5" width="29" height="17" fill="none" stroke="#f0b070" stroke-width=".8" opacity=".8"/>
 <rect x="109" y="126.6" width="28" height="8" fill="#4f8a3a"/>
 <rect x="112" y="128.6" width="17" height="4" fill="#2f5a28"/>
 <rect x="132" y="129" width="3" height="3" fill="#26481f"/>
 <text x="123" y="125.4" font-family="Liberation Sans" font-weight="bold" font-size="10" text-anchor="middle" fill="#fff3dc" textLength="26" lengthAdjust="spacingAndGlyphs">PADS</text>
 <!-- share folder -->
 <path d="M190,118.2Q190,116 192.2,116H201.5Q203,116 203.8,117.3L205,119.3H218Q220,119.3 220,121.3V134H190Z" fill="#f9b822"/>
 <path d="M190,121.5H220V134H190Z" fill="#fcc43a"/>
 <path d="M199.5,130.2Q196.8,130 197.3,127.6Q197.8,125.8 199.8,126Q200.8,123 204,123.2Q206.8,123.4 207.6,126Q210.6,126 210.6,128.2Q210.6,130.2 208.3,130.2Z" fill="#4fa3f2"/>
 <circle cx="215.8" cy="121" r="5.7" fill="#3fae49"/>
 <circle cx="215.8" cy="121" r="5.2" fill="none" stroke="#2f9a3a" stroke-width=".8"/>
 <path d="M212.8,121H218.8M215.8,118V124" stroke="#fff" stroke-width="2"/>
</g>
</svg>
<svg style="left:0;top:134px" width="1521" height="28" viewBox="0 134 1521 28">
<defs>
 <linearGradient id="gold" x1="0" y1="0" x2="1" y2="0"><stop offset="0" stop-color="#f2d55e"/><stop offset=".45" stop-color="#f3dc80"/><stop offset=".8" stop-color="#e0b83e"/><stop offset="1" stop-color="#c59c26"/></linearGradient>
 <linearGradient id="lb" x1="0" y1="0" x2="0" y2="1"><stop offset="0" stop-color="#e4f1fb"/><stop offset="1" stop-color="#bcdcf4"/></linearGradient>
 <linearGradient id="cb" x1="0" y1="0" x2="0" y2="1"><stop offset="0" stop-color="#d6ecfb"/><stop offset=".5" stop-color="#a9d8f8"/><stop offset="1" stop-color="#bfe3fa"/></linearGradient>
 <linearGradient id="fd" x1="0" y1="0" x2="1" y2="0"><stop offset="0" stop-color="#f8e3a0"/><stop offset="1" stop-color="#e7bf5c"/></linearGradient>
 <linearGradient id="pg" x1="0" y1="0" x2="0" y2="1"><stop offset="0" stop-color="#d6e7f8"/><stop offset="1" stop-color="#b4d0ee"/></linearGradient>
</defs>
<!-- separators -->
<path d="M336.5,137V159M596.5,137V159" stroke="#a8a8a8" stroke-width="1" shape-rendering="crispEdges"/>
<!-- icon 1: folder + document -->
<path d="M269.5,140.6H278.6L280.4,142.2V153.8H269.5Z" fill="url(#fd)" stroke="#dcbb62" stroke-width=".8"/>
<path d="M269.5,140.6L273.2,142.6V155L269.5,153.8Z" fill="#f4dc95" stroke="#d6b052" stroke-width=".6"/>
<path d="M275,143.8H280.4L283,146.4V155.4H275Z" fill="#fdfdfd" stroke="#8d98a5" stroke-width=".8"/>
<path d="M280.4,143.8V146.4H283" fill="none" stroke="#8d98a5" stroke-width=".6"/>
<path d="M276.3,147.5H281.5M276.3,149.4H281.5M276.3,151.3H281.5M276.3,153.2H280" stroke="#8fa6ba" stroke-width=".8"/>
<!-- icon 2: rotate cw -->
<path d="M298.5,147.4H307.8V155.6H298.5Z" fill="#fdfdfd" stroke="#b4b9c2" stroke-width=".8"/>
<path d="M294.6,140.6H301.7V149.5H292.4V142.8Z" fill="url(#pg)" stroke="#5c8cc6" stroke-width="1"/>
<path d="M292.4,142.8H294.6V140.6" fill="none" stroke="#5c8cc6" stroke-width=".7"/>
<path d="M303.2,142.3H305.4Q306.4,142.3 306.4,143.4V144.4" stroke="#111" stroke-width="1.4" fill="none"/><path d="M304.4,144.2H308.4L306.4,146.4Z" fill="#111"/>
<!-- icon 3: rotate ccw -->
<path d="M316.4,147.4H325.7V155.6H316.4Z" fill="#fdfdfd" stroke="#b4b9c2" stroke-width=".8"/>
<path d="M322.6,140.6H329.7L331.9,142.8V149.5H322.6Z" fill="url(#pg)" stroke="#5c8cc6" stroke-width="1"/>
<path d="M329.7,140.6V142.8H331.9" fill="none" stroke="#5c8cc6" stroke-width=".7"/>
<path d="M321.1,142.3H318.9Q317.9,142.3 317.9,143.4V144.4" stroke="#111" stroke-width="1.4" fill="none"/><path d="M315.9,144.2H319.9L317.9,146.4Z" fill="#111"/>
<!-- page input -->
<rect x="384" y="138" width="39.5" height="20" fill="#fff"/>
<path d="M384,158V138.5H423.5" stroke="#a5a5a5" stroke-width="1" fill="none" shape-rendering="crispEdges"/>
<!-- prev (gold) / next (grey) -->
<path d="M457.6,148L467.5,140.4V155.6Z" fill="url(#gold)" stroke="#c9a02c" stroke-width="1" stroke-linejoin="round"/>
<path d="M494.8,148L484.2,140V156Z" fill="#9a9a9a"/>
<!-- fit width -->
<rect x="506.7" y="140.7" width="11" height="14.6" fill="url(#lb)" stroke="#4d78ad" stroke-width="1.1"/>
<path d="M508.1,148L511.6,144.8V151.2ZM516.3,148L512.8,144.8V151.2Z" fill="#2a5892"/>
<!-- fit page -->
<rect x="529.7" y="140.7" width="12.6" height="14.6" fill="url(#lb)" stroke="#4d78ad" stroke-width="1.1"/>
<path d="M531.3,148L533.6,146V150ZM540.7,148L538.4,146V150ZM536,142.6L538,144.8H534ZM536,153.4L538,151.2H534Z" fill="#2f5f98"/>
<circle cx="536" cy="148" r="1.9" fill="#dbe9f6" stroke="#9eb9d6" stroke-width=".5"/>
<!-- zoom out / in -->
<circle cx="560" cy="148" r="7.5" fill="url(#cb)" stroke="#7188a2" stroke-width="1.2"/>
<path d="M556,148H564" stroke="#0f5ea8" stroke-width="2"/>
<circle cx="584" cy="148" r="7.5" fill="url(#cb)" stroke="#7188a2" stroke-width="1.2"/>
<path d="M580,148H588M584,144V152" stroke="#0f5ea8" stroke-width="2"/>
<!-- find input -->
<rect x="639" y="138" width="159.5" height="20" fill="#fff"/>
<path d="M639.5,158V138.5H798.5" stroke="#a2a2a2" stroke-width="1" fill="none" shape-rendering="crispEdges"/><path d="M640,139.5H798.5" stroke="#d8d8d8" stroke-width="1" fill="none" shape-rendering="crispEdges"/>
<!-- find prev / next -->
<path d="M805,142H811.5L813.8,144.3L820,140V156L813.8,151.7V155.5H805Z" fill="#9a9a9a"/>
<path d="M830.2,140L836.4,144.3V142H842.5L845,144.5V155.5H836.4V151.7L830.2,156Z" fill="#9a9a9a"/>
<path d="M808.5,142.5L808.3,146" stroke="#c8c8c8" stroke-width="1.1"/><path d="M840.3,142.4L841.5,145" stroke="#c8c8c8" stroke-width="1.1"/>
<!-- Aa -->
<path d="M854.4,154.7L859,144L863.6,154.7M856.3,151H861.8" stroke="#7173e6" stroke-width="1.1" fill="none"/>
<text x="861" y="147.8" font-family="Liberation Sans" font-size="10.5" fill="#c2257f" stroke="#c2257f" stroke-width=".3">a</text>
</svg>
<div class="ui" style="left:346px;top:141.5px">Page:</div>
<div class="ui" style="left:413px;top:141.5px">2</div>
<div class="ui" style="left:427.5px;top:141.5px;word-spacing:2.5px">/ 2</div>
<div class="ui" style="left:606.2px;top:141.5px">Find:</div>
<svg style="left:0;top:0" width="1521" height="859" viewBox="0 0 1521 859">
<g>
<rect x="734.1" y="325.7" width="9.1" height="15.1" fill="#bebebe" rx="4.5"/>
<rect x="734.1" y="343.5" width="9.1" height="14.7" fill="#bebebe" rx="4.5"/>
<rect x="732.9" y="365.0" width="9.5" height="14.4" fill="#bebebe" rx="4.5"/>
<rect x="779.5" y="325.7" width="8.3" height="14.8" fill="#bebebe" rx="4.1"/>
<rect x="780.2" y="365.0" width="9.1" height="14.4" fill="#bebebe" rx="4.5"/>
<circle cx="812.8" cy="372.9" r="12.9" fill="#bebebe"/>
<circle cx="972.3" cy="410.7" r="12.9" fill="#bebebe"/>
<circle cx="696.0" cy="471.2" r="13.0" fill="#bebebe"/>
<circle cx="1083.0" cy="489.0" r="12.9" fill="#bebebe"/>
<circle cx="929.4" cy="585.3" r="9.4" fill="#bebebe"/>
<circle cx="691.7" cy="419.0" r="6.0" fill="#bebebe"/>
<circle cx="691.4" cy="435.7" r="7.3" fill="#bebebe"/>
<circle cx="686.4" cy="453.8" r="3.5" fill="#bebebe"/>
<circle cx="1094.0" cy="639.2" r="6.0" fill="#bebebe"/>
<circle cx="1092.5" cy="656.1" r="7.3" fill="#bebebe"/>
<circle cx="1079.4" cy="674.3" r="3.5" fill="#bebebe"/>
<circle cx="697.0" cy="492.4" r="4.0" fill="#bebebe"/>
<circle cx="713.7" cy="492.4" r="4.0" fill="#bebebe"/>
<circle cx="730.8" cy="492.4" r="4.0" fill="#bebebe"/>
<circle cx="814.2" cy="421.0" r="4.0" fill="#bebebe"/>
<circle cx="826.4" cy="421.0" r="4.0" fill="#bebebe"/>
<circle cx="844.3" cy="422.4" r="4.0" fill="#bebebe"/>
<circle cx="844.3" cy="433.9" r="4.0" fill="#bebebe"/>
<circle cx="844.3" cy="445.2" r="4.0" fill="#bebebe"/>
<circle cx="788.9" cy="518.6" r="4.0" fill="#bebebe"/>
<circle cx="788.9" cy="552.9" r="4.0" fill="#bebebe"/>
<circle cx="788.9" cy="569.1" r="4.0" fill="#bebebe"/>
<circle cx="687.2" cy="527.5" r="4.0" fill="#bebebe"/>
<circle cx="687.2" cy="544.9" r="4.0" fill="#bebebe"/>
<circle cx="687.2" cy="562.8" r="4.0" fill="#bebebe"/>
<circle cx="694.8" cy="583.8" r="4.0" fill="#bebebe"/>
<circle cx="703.8" cy="593.8" r="4.0" fill="#bebebe"/>
<circle cx="694.8" cy="603.5" r="4.0" fill="#bebebe"/>
<circle cx="703.8" cy="612.7" r="4.0" fill="#bebebe"/>
<circle cx="694.8" cy="622.0" r="4.0" fill="#bebebe"/>
<circle cx="703.8" cy="631.9" r="4.0" fill="#bebebe"/>
<circle cx="694.8" cy="641.8" r="4.0" fill="#bebebe"/>
<circle cx="703.8" cy="651.0" r="4.0" fill="#bebebe"/>
<circle cx="694.8" cy="659.9" r="4.0" fill="#bebebe"/>
<circle cx="987.8" cy="548.2" r="4.0" fill="#bebebe"/>
<circle cx="998.3" cy="557.0" r="4.0" fill="#bebebe"/>
<circle cx="998.7" cy="584.3" r="4.0" fill="#bebebe"/>
<circle cx="998.7" cy="597.9" r="4.0" fill="#bebebe"/>
<circle cx="998.7" cy="611.5" r="4.0" fill="#bebebe"/>
<circle cx="981.3" cy="611.5" r="4.0" fill="#bebebe"/>
<circle cx="914.7" cy="684.8" r="4.0" fill="#bebebe"/>
<circle cx="931.8" cy="684.8" r="4.0" fill="#bebebe"/>
<circle cx="702.8" cy="502.5" r="3.0" fill="#bebebe"/>
<circle cx="730.0" cy="502.5" r="3.0" fill="#bebebe"/>
<circle cx="964.7" cy="611.5" r="3.5" fill="#bebebe"/>
<circle cx="930.3" cy="629.6" r="5.5" fill="#bebebe"/>
<circle cx="930.3" cy="651.4" r="4.5" fill="#bebebe"/>
<circle cx="1023.0" cy="674.3" r="5.5" fill="#bebebe"/>
<circle cx="1040.0" cy="674.3" r="5.5" fill="#bebebe"/>
<circle cx="898.4" cy="694.4" r="5.0" fill="#bebebe"/>
<rect x="997.2" y="687.9" width="6.8" height="14.3" fill="#bebebe" rx="3.4"/>
<rect x="1059.2" y="687.9" width="6.8" height="14.3" fill="#bebebe" rx="3.4"/>
<rect x="697.0" y="506.0" width="17.7" height="6.5" fill="#bebebe"/>
<rect x="751.5" y="506.0" width="17.4" height="6.5" fill="#bebebe"/>
<rect x="697.0" y="568.4" width="17.7" height="7.2" fill="#bebebe"/>
<rect x="751.5" y="568.4" width="17.4" height="7.2" fill="#bebebe"/>
<rect x="772.7" y="511.0" width="6.8" height="9.7" fill="#bebebe"/>
<rect x="771.2" y="525.0" width="7.5" height="6.0" fill="#bebebe"/>
<rect x="771.2" y="537.3" width="7.5" height="6.9" fill="#bebebe"/>
<rect x="771.2" y="546.4" width="7.5" height="6.6" fill="#bebebe"/>
<rect x="771.2" y="554.7" width="7.5" height="6.1" fill="#bebebe"/>
<rect x="772.7" y="562.3" width="6.8" height="8.3" fill="#bebebe"/>
<rect x="725.0" y="525.7" width="7.9" height="6.5" fill="#bebebe"/>
<rect x="725.0" y="537.3" width="7.9" height="6.6" fill="#bebebe"/>
<rect x="725.0" y="548.7" width="7.9" height="6.8" fill="#bebebe"/>
<rect x="1019.2" y="541.9" width="17.4" height="6.8" fill="#bebebe"/>
<rect x="1073.3" y="541.9" width="17.7" height="6.8" fill="#bebebe"/>
<rect x="1019.2" y="604.7" width="17.4" height="6.8" fill="#bebebe"/>
<rect x="1073.3" y="604.7" width="17.7" height="6.8" fill="#bebebe"/>
<rect x="1008.6" y="546.4" width="6.8" height="8.3" fill="#bebebe"/>
<rect x="1009.3" y="556.3" width="7.6" height="6.0" fill="#bebebe"/>
<rect x="1009.3" y="563.8" width="7.6" height="6.8" fill="#bebebe"/>
<rect x="1009.3" y="573.7" width="7.6" height="6.0" fill="#bebebe"/>
<rect x="1009.3" y="586.5" width="7.6" height="6.1" fill="#bebebe"/>
<rect x="1008.6" y="596.4" width="6.8" height="9.8" fill="#bebebe"/>
<rect x="1055.2" y="561.6" width="7.5" height="6.8" fill="#bebebe"/>
<rect x="1055.2" y="573.4" width="7.5" height="6.3" fill="#bebebe"/>
<rect x="1055.2" y="585.0" width="7.5" height="6.8" fill="#bebebe"/>
<rect x="756.5" y="580.2" width="9.4" height="7.8" fill="#bebebe"/>
<rect x="787.0" y="580.2" width="8.8" height="7.8" fill="#bebebe"/>
<rect x="756.5" y="651.1" width="9.4" height="8.0" fill="#bebebe"/>
<rect x="787.0" y="651.1" width="8.8" height="8.0" fill="#bebebe"/>
<rect x="746.2" y="591.0" width="8.3" height="4.6" fill="#bebebe"/>
<rect x="746.2" y="599.4" width="8.3" height="18.1" fill="#bebebe"/>
<rect x="746.2" y="620.5" width="8.3" height="5.0" fill="#bebebe"/>
<rect x="746.2" y="628.9" width="8.3" height="4.5" fill="#bebebe"/>
<rect x="746.2" y="636.4" width="8.3" height="4.6" fill="#bebebe"/>
<rect x="746.2" y="644.0" width="8.3" height="4.0" fill="#bebebe"/>
<rect x="937.4" y="428.0" width="7.6" height="7.0" fill="#bebebe" rx="1.5"/>
<rect x="951.8" y="428.0" width="7.6" height="7.0" fill="#bebebe" rx="1.5"/>
<rect x="937.4" y="479.5" width="7.6" height="6.9" fill="#bebebe" rx="1.5"/>
<rect x="951.8" y="479.5" width="7.6" height="6.9" fill="#bebebe" rx="1.5"/>
<rect x="938.2" y="436.4" width="4.5" height="41.6" fill="#bebebe"/>
<rect x="954.0" y="436.4" width="4.6" height="41.6" fill="#bebebe"/>
<rect x="737.1" y="672.7" width="6.8" height="6.8" fill="#bebebe"/>
<rect x="780.2" y="672.7" width="6.8" height="6.8" fill="#bebebe"/>
<rect x="737.1" y="686.4" width="6.8" height="6.8" fill="#bebebe"/>
<rect x="780.2" y="686.4" width="6.8" height="6.8" fill="#bebebe"/>
<rect x="746.2" y="672.7" width="31.8" height="3.8" fill="#bebebe"/>
<rect x="746.2" y="689.4" width="31.8" height="4.1" fill="#bebebe"/>
<rect x="746.2" y="677.5" width="31.8" height="10.9" fill="#dedede"/>
<rect x="940.2" y="673.5" width="7.1" height="5.3" fill="#bebebe" rx="2"/>
<rect x="984.0" y="673.5" width="6.7" height="5.3" fill="#bebebe" rx="2"/>
<rect x="940.2" y="686.4" width="7.1" height="6.0" fill="#bebebe" rx="2"/>
<rect x="984.0" y="686.4" width="6.7" height="6.0" fill="#bebebe" rx="2"/>
<rect x="949.2" y="672.7" width="32.4" height="3.8" fill="#bebebe"/>
<rect x="949.2" y="689.4" width="32.4" height="3.8" fill="#bebebe"/>
<rect x="958.6" y="357.0" width="7.2" height="19.4" fill="#bebebe"/>
<rect x="972.0" y="357.0" width="7.2" height="19.4" fill="#bebebe"/>
<rect x="985.4" y="357.0" width="7.2" height="19.4" fill="#bebebe"/>
<rect x="805.2" y="662.1" width="10.6" height="19.9" fill="#bebebe"/>
<rect x="818.5" y="662.1" width="10.6" height="19.9" fill="#bebebe"/>
<rect x="693.2" y="371.0" width="14.4" height="8.4" fill="#bebebe"/>
<rect x="693.2" y="387.7" width="14.4" height="8.3" fill="#bebebe"/>
<rect x="1074.4" y="371.0" width="15.1" height="8.4" fill="#bebebe"/>
<rect x="1074.4" y="387.7" width="15.1" height="8.3" fill="#bebebe"/>
<rect x="710.0" y="402.5" width="12.5" height="13.0" fill="#c8c8c8"/>
<rect x="1040.3" y="441.7" width="15.2" height="6.8" fill="#bebebe"/>
<rect x="1040.3" y="454.6" width="15.2" height="6.8" fill="#bebebe"/>
<rect x="884.7" y="517.0" width="11.9" height="13.2" fill="#bebebe"/>
<rect x="886.0" y="546.4" width="7.0" height="7.1" fill="#bebebe" rx="2"/>
<rect x="898.5" y="546.4" width="7.2" height="7.1" fill="#bebebe" rx="2"/>
<rect x="886.0" y="571.0" width="7.0" height="7.2" fill="#bebebe" rx="2"/>
<rect x="898.5" y="571.0" width="7.2" height="7.2" fill="#bebebe" rx="2"/>
<rect x="886.0" y="555.0" width="4.0" height="14.5" fill="#bebebe"/>
<rect x="901.5" y="555.0" width="4.2" height="14.5" fill="#bebebe"/>
<rect x="944.0" y="517.5" width="15.5" height="3.0" fill="#cfcfcf"/>
<rect x="944.0" y="526.0" width="15.5" height="3.0" fill="#cfcfcf"/>
<rect x="944.0" y="521.0" width="3.0" height="4.5" fill="#cfcfcf"/>
<rect x="956.5" y="521.0" width="3.0" height="4.5" fill="#cfcfcf"/>
<path d="M722.0,339.3h4.2v2.7h-4.2zM727.0,339.3h4.2v2.7h-4.2z" fill="#ababab"/>
<path d="M725.0,345.3h2.6v3.0h-2.6zM728.4,345.3h2.6v3.0h-2.6zM725.0,349.1h2.6v3.0h-2.6zM728.4,349.1h2.6v3.0h-2.6zM725.0,352.8h2.6v3.0h-2.6zM728.4,352.8h2.6v3.0h-2.6z" fill="#ababab"/>
<path d="M722.0,361.2h4.2v2.7h-4.2zM727.0,361.2h4.2v2.7h-4.2z" fill="#ababab"/>
<path d="M725.0,367.3h4.2v2.7h-4.2z" fill="#ababab"/>
<path d="M722.7,376.4h4.2v2.7h-4.2z" fill="#ababab"/>
<path d="M722.0,381.7h4.2v2.7h-4.2zM727.0,381.7h4.2v2.7h-4.2zM722.0,385.1h4.2v2.7h-4.2zM727.0,385.1h4.2v2.7h-4.2z" fill="#ababab"/>
<path d="M719.7,390.0h4.2v2.7h-4.2zM724.7,390.0h4.2v2.7h-4.2zM719.7,393.4h4.2v2.7h-4.2zM724.7,393.4h4.2v2.7h-4.2zM724.7,396.9h4.2v2.7h-4.2z" fill="#ababab"/>
<path d="M694.7,400.0h4.2v2.7h-4.2zM699.7,400.0h4.2v2.7h-4.2zM694.7,403.4h4.2v2.7h-4.2zM699.7,403.4h4.2v2.7h-4.2zM699.7,406.9h4.2v2.7h-4.2z" fill="#ababab"/>
<path d="M805.2,333.0h4.2v2.7h-4.2zM810.2,333.0h4.2v2.7h-4.2z" fill="#ababab"/>
<path d="M791.6,338.5h4.2v2.7h-4.2zM796.6,338.5h4.2v2.7h-4.2zM791.6,341.9h4.2v2.7h-4.2zM796.6,341.9h4.2v2.7h-4.2zM791.6,345.4h4.2v2.7h-4.2zM796.6,345.4h4.2v2.7h-4.2zM791.6,348.8h4.2v2.7h-4.2zM796.6,348.8h4.2v2.7h-4.2zM791.6,352.3h4.2v2.7h-4.2zM796.6,352.3h4.2v2.7h-4.2z" fill="#ababab"/>
<path d="M802.9,342.3h4.2v2.7h-4.2zM807.9,342.3h4.2v2.7h-4.2zM802.9,345.8h4.2v2.7h-4.2zM807.9,345.8h4.2v2.7h-4.2zM807.9,349.2h4.2v2.7h-4.2z" fill="#ababab"/>
<path d="M815.8,343.0h3.0v2.7h-3.0zM815.8,346.4h3.0v2.7h-3.0z" fill="#ababab"/>
<path d="M796.6,393.0h4.2v2.7h-4.2zM791.6,396.4h4.2v2.7h-4.2zM796.6,396.4h4.2v2.7h-4.2zM791.6,399.9h4.2v2.7h-4.2zM796.6,399.9h4.2v2.7h-4.2z" fill="#ababab"/>
<path d="M774.2,409.6h2.6v4.0h-2.6zM781.0,409.6h2.6v4.0h-2.6zM784.4,409.6h2.6v4.0h-2.6zM787.8,409.6h2.6v4.0h-2.6zM794.6,409.6h2.6v4.0h-2.6zM798.0,409.6h2.6v4.0h-2.6zM774.2,414.4h2.6v4.0h-2.6zM777.6,414.4h2.6v4.0h-2.6zM781.0,414.4h2.6v4.0h-2.6zM784.4,414.4h2.6v4.0h-2.6zM787.8,414.4h2.6v4.0h-2.6zM791.2,414.4h2.6v4.0h-2.6zM794.6,414.4h2.6v4.0h-2.6zM798.0,414.4h2.6v4.0h-2.6z" fill="#ababab"/>
<path d="M774.2,421.7h4.2v2.7h-4.2zM779.2,421.7h4.2v2.7h-4.2zM784.2,421.7h4.2v2.7h-4.2zM789.2,421.7h4.2v2.7h-4.2z" fill="#ababab"/>
<path d="M998.7,352.0h4.2v2.7h-4.2zM1003.7,352.0h4.2v2.7h-4.2zM1008.7,352.0h4.2v2.7h-4.2zM1013.7,352.0h4.2v2.7h-4.2zM998.7,355.4h4.2v2.7h-4.2zM1003.7,355.4h4.2v2.7h-4.2zM1008.7,355.4h4.2v2.7h-4.2zM1003.7,358.9h4.2v2.7h-4.2zM1008.7,358.9h4.2v2.7h-4.2zM1013.7,358.9h4.2v2.7h-4.2zM998.7,362.3h4.2v2.7h-4.2zM1003.7,362.3h4.2v2.7h-4.2zM1008.7,362.3h4.2v2.7h-4.2zM1013.7,362.3h4.2v2.7h-4.2z" fill="#ababab"/>
<path d="M1010.8,372.6h4.2v2.7h-4.2zM1015.8,372.6h4.2v2.7h-4.2z" fill="#ababab"/>
<path d="M995.0,383.6h6.0v3.4h-6.0zM1001.8,383.6h6.0v3.4h-6.0zM1008.6,383.6h6.0v3.4h-6.0z" fill="#ababab"/>
<path d="M995.0,389.5h4.2v2.7h-4.2zM1000.0,389.5h4.2v2.7h-4.2zM1005.0,389.5h4.2v2.7h-4.2zM1010.0,389.5h4.2v2.7h-4.2zM1015.0,389.5h4.2v2.7h-4.2zM995.0,392.9h4.2v2.7h-4.2zM1000.0,392.9h4.2v2.7h-4.2zM1005.0,392.9h4.2v2.7h-4.2zM1010.0,392.9h4.2v2.7h-4.2zM995.0,396.4h4.2v2.7h-4.2zM1000.0,396.4h4.2v2.7h-4.2zM1010.0,396.4h4.2v2.7h-4.2zM1015.0,396.4h4.2v2.7h-4.2z" fill="#ababab"/>
<path d="M1001.0,403.0h4.2v2.7h-4.2zM1006.0,403.0h4.2v2.7h-4.2zM1011.0,403.0h4.2v2.7h-4.2zM1001.0,406.4h4.2v2.7h-4.2zM1006.0,406.4h4.2v2.7h-4.2zM1011.0,406.4h4.2v2.7h-4.2z" fill="#ababab"/>
<path d="M981.5,382.0h2.6v2.7h-2.6zM981.5,385.4h2.6v2.7h-2.6z" fill="#ababab"/>
<path d="M992.8,361.0h2.4v2.4h-2.4zM996.0,367.3h2.4v2.4h-2.4zM996.0,373.6h2.4v2.4h-2.4z" fill="#ababab"/>
<path d="M1029.0,371.8h4.2v2.7h-4.2zM1034.0,371.8h4.2v2.7h-4.2zM1039.0,371.8h4.2v2.7h-4.2zM1049.0,371.8h4.2v2.7h-4.2zM1054.0,371.8h4.2v2.7h-4.2zM1059.0,371.8h4.2v2.7h-4.2zM1039.0,375.2h4.2v2.7h-4.2zM1049.0,375.2h4.2v2.7h-4.2zM1029.0,378.7h4.2v2.7h-4.2zM1034.0,378.7h4.2v2.7h-4.2zM1039.0,378.7h4.2v2.7h-4.2zM1044.0,378.7h4.2v2.7h-4.2zM1049.0,378.7h4.2v2.7h-4.2zM1059.0,378.7h4.2v2.7h-4.2zM1029.0,382.1h4.2v2.7h-4.2zM1034.0,382.1h4.2v2.7h-4.2zM1039.0,382.1h4.2v2.7h-4.2zM1044.0,382.1h4.2v2.7h-4.2zM1049.0,382.1h4.2v2.7h-4.2zM1054.0,382.1h4.2v2.7h-4.2zM1059.0,382.1h4.2v2.7h-4.2zM1029.0,385.6h4.2v2.7h-4.2zM1034.0,385.6h4.2v2.7h-4.2zM1039.0,385.6h4.2v2.7h-4.2zM1049.0,385.6h4.2v2.7h-4.2zM1054.0,385.6h4.2v2.7h-4.2zM1059.0,385.6h4.2v2.7h-4.2zM1029.0,389.0h4.2v2.7h-4.2zM1034.0,389.0h4.2v2.7h-4.2zM1049.0,389.0h4.2v2.7h-4.2zM1054.0,389.0h4.2v2.7h-4.2zM1049.0,392.5h4.2v2.7h-4.2zM1054.0,392.5h4.2v2.7h-4.2zM1059.0,392.5h4.2v2.7h-4.2z" fill="#ababab"/>
<path d="M1032.0,396.0h4.2v2.7h-4.2zM1037.0,396.0h4.2v2.7h-4.2zM1032.0,399.4h4.2v2.7h-4.2zM1042.0,399.4h4.2v2.7h-4.2zM1037.0,402.9h4.2v2.7h-4.2zM1032.0,406.3h4.2v2.7h-4.2zM1037.0,406.3h4.2v2.7h-4.2zM1042.0,406.3h4.2v2.7h-4.2zM1032.0,409.8h4.2v2.7h-4.2zM1037.0,409.8h4.2v2.7h-4.2zM1042.0,409.8h4.2v2.7h-4.2zM1037.0,413.2h4.2v2.7h-4.2zM1042.0,413.2h4.2v2.7h-4.2zM1032.0,416.7h4.2v2.7h-4.2zM1037.0,416.7h4.2v2.7h-4.2zM1042.0,416.7h4.2v2.7h-4.2z" fill="#ababab"/>
<path d="M1070.0,399.0h4.2v2.7h-4.2zM1075.0,399.0h4.2v2.7h-4.2zM1080.0,399.0h4.2v2.7h-4.2zM1085.0,399.0h4.2v2.7h-4.2zM1090.0,399.0h4.2v2.7h-4.2zM1070.0,402.4h4.2v2.7h-4.2zM1080.0,402.4h4.2v2.7h-4.2zM1085.0,402.4h4.2v2.7h-4.2zM1090.0,402.4h4.2v2.7h-4.2zM1070.0,405.9h4.2v2.7h-4.2zM1075.0,405.9h4.2v2.7h-4.2zM1085.0,405.9h4.2v2.7h-4.2zM1090.0,405.9h4.2v2.7h-4.2zM1070.0,409.3h4.2v2.7h-4.2zM1075.0,409.3h4.2v2.7h-4.2zM1080.0,409.3h4.2v2.7h-4.2zM1085.0,409.3h4.2v2.7h-4.2zM1070.0,412.8h4.2v2.7h-4.2zM1075.0,412.8h4.2v2.7h-4.2zM1085.0,412.8h4.2v2.7h-4.2zM1090.0,412.8h4.2v2.7h-4.2zM1075.0,416.2h4.2v2.7h-4.2zM1080.0,416.2h4.2v2.7h-4.2z" fill="#ababab"/>
<path d="M1062.0,398.0h4.2v2.7h-4.2zM1052.0,401.4h4.2v2.7h-4.2zM1062.0,401.4h4.2v2.7h-4.2zM1057.0,404.9h4.2v2.7h-4.2zM1052.0,408.3h4.2v2.7h-4.2zM1057.0,408.3h4.2v2.7h-4.2zM1062.0,408.3h4.2v2.7h-4.2zM1052.0,411.8h4.2v2.7h-4.2zM1057.0,411.8h4.2v2.7h-4.2zM1062.0,411.8h4.2v2.7h-4.2z" fill="#ababab"/>
<path d="M780.0,434.0h4.2v2.7h-4.2zM795.0,434.0h4.2v2.7h-4.2zM785.0,437.4h4.2v2.7h-4.2zM790.0,437.4h4.2v2.7h-4.2zM780.0,440.9h4.2v2.7h-4.2zM785.0,440.9h4.2v2.7h-4.2zM790.0,440.9h4.2v2.7h-4.2zM795.0,440.9h4.2v2.7h-4.2zM780.0,444.3h4.2v2.7h-4.2zM785.0,444.3h4.2v2.7h-4.2zM790.0,444.3h4.2v2.7h-4.2zM795.0,444.3h4.2v2.7h-4.2z" fill="#ababab"/>
<path d="M803.0,436.0h4.2v2.7h-4.2zM808.0,436.0h4.2v2.7h-4.2zM813.0,436.0h4.2v2.7h-4.2zM828.0,436.0h4.2v2.7h-4.2zM803.0,439.4h4.2v2.7h-4.2zM808.0,439.4h4.2v2.7h-4.2zM813.0,439.4h4.2v2.7h-4.2zM823.0,439.4h4.2v2.7h-4.2zM828.0,439.4h4.2v2.7h-4.2zM808.0,442.9h4.2v2.7h-4.2zM813.0,442.9h4.2v2.7h-4.2zM823.0,442.9h4.2v2.7h-4.2zM828.0,442.9h4.2v2.7h-4.2zM803.0,446.3h4.2v2.7h-4.2zM808.0,446.3h4.2v2.7h-4.2zM813.0,446.3h4.2v2.7h-4.2zM823.0,446.3h4.2v2.7h-4.2zM828.0,446.3h4.2v2.7h-4.2z" fill="#ababab"/>
<path d="M779.0,453.0h2.4v2.7h-2.4zM782.2,453.0h2.4v2.7h-2.4zM779.0,456.4h2.4v2.7h-2.4zM782.2,456.4h2.4v2.7h-2.4z" fill="#ababab"/>
<path d="M779.0,463.0h4.2v2.7h-4.2zM784.0,463.0h4.2v2.7h-4.2zM789.0,463.0h4.2v2.7h-4.2zM779.0,466.4h4.2v2.7h-4.2zM784.0,466.4h4.2v2.7h-4.2zM789.0,466.4h4.2v2.7h-4.2zM794.0,466.4h4.2v2.7h-4.2zM784.0,469.9h4.2v2.7h-4.2zM794.0,469.9h4.2v2.7h-4.2zM779.0,473.3h4.2v2.7h-4.2zM784.0,473.3h4.2v2.7h-4.2zM789.0,473.3h4.2v2.7h-4.2zM794.0,473.3h4.2v2.7h-4.2zM779.0,476.8h4.2v2.7h-4.2zM784.0,476.8h4.2v2.7h-4.2zM794.0,476.8h4.2v2.7h-4.2zM779.0,480.2h4.2v2.7h-4.2zM784.0,480.2h4.2v2.7h-4.2zM789.0,480.2h4.2v2.7h-4.2zM779.0,483.7h4.2v2.7h-4.2zM789.0,483.7h4.2v2.7h-4.2z" fill="#ababab"/>
<path d="M826.0,460.0h4.2v2.7h-4.2zM831.0,460.0h4.2v2.7h-4.2zM826.0,463.4h4.2v2.7h-4.2zM836.0,463.4h4.2v2.7h-4.2zM826.0,466.9h4.2v2.7h-4.2zM831.0,466.9h4.2v2.7h-4.2zM836.0,466.9h4.2v2.7h-4.2zM826.0,470.3h4.2v2.7h-4.2zM831.0,470.3h4.2v2.7h-4.2zM836.0,470.3h4.2v2.7h-4.2zM826.0,477.2h4.2v2.7h-4.2zM831.0,477.2h4.2v2.7h-4.2zM836.0,477.2h4.2v2.7h-4.2zM826.0,480.7h4.2v2.7h-4.2zM831.0,480.7h4.2v2.7h-4.2zM836.0,480.7h4.2v2.7h-4.2zM836.0,484.1h4.2v2.7h-4.2z" fill="#ababab"/>
<path d="M816.0,487.0h4.2v2.7h-4.2zM821.0,487.0h4.2v2.7h-4.2zM836.0,487.0h4.2v2.7h-4.2zM806.0,490.4h4.2v2.7h-4.2zM816.0,490.4h4.2v2.7h-4.2zM821.0,490.4h4.2v2.7h-4.2zM831.0,490.4h4.2v2.7h-4.2zM836.0,490.4h4.2v2.7h-4.2zM806.0,493.9h4.2v2.7h-4.2zM811.0,493.9h4.2v2.7h-4.2zM826.0,493.9h4.2v2.7h-4.2zM831.0,493.9h4.2v2.7h-4.2zM836.0,493.9h4.2v2.7h-4.2zM806.0,497.3h4.2v2.7h-4.2zM811.0,497.3h4.2v2.7h-4.2zM816.0,497.3h4.2v2.7h-4.2zM821.0,497.3h4.2v2.7h-4.2zM826.0,497.3h4.2v2.7h-4.2zM831.0,497.3h4.2v2.7h-4.2zM836.0,497.3h4.2v2.7h-4.2z" fill="#ababab"/>
<path d="M743.4,485.6h2.6v4.0h-2.6zM746.8,485.6h2.6v4.0h-2.6zM750.2,485.6h2.6v4.0h-2.6zM753.6,485.6h2.6v4.0h-2.6zM757.0,485.6h2.6v4.0h-2.6zM743.4,490.4h2.6v4.0h-2.6zM746.8,490.4h2.6v4.0h-2.6zM750.2,490.4h2.6v4.0h-2.6zM753.6,490.4h2.6v4.0h-2.6zM757.0,490.4h2.6v4.0h-2.6z" fill="#ababab"/>
<path d="M802.2,511.3h2.6v4.0h-2.6zM805.6,511.3h2.6v4.0h-2.6zM809.0,511.3h2.6v4.0h-2.6zM812.4,511.3h2.6v4.0h-2.6zM815.8,511.3h2.6v4.0h-2.6zM819.2,511.3h2.6v4.0h-2.6zM802.2,516.0h2.6v4.0h-2.6zM805.6,516.0h2.6v4.0h-2.6zM809.0,516.0h2.6v4.0h-2.6zM812.4,516.0h2.6v4.0h-2.6zM815.8,516.0h2.6v4.0h-2.6zM819.2,516.0h2.6v4.0h-2.6z" fill="#ababab"/>
<path d="M802.2,522.7h4.2v2.7h-4.2zM807.2,522.7h4.2v2.7h-4.2zM812.2,522.7h4.2v2.7h-4.2zM817.2,522.7h4.2v2.7h-4.2zM822.2,522.7h4.2v2.7h-4.2zM827.2,522.7h4.2v2.7h-4.2zM832.2,522.7h4.2v2.7h-4.2z" fill="#ababab"/>
<path d="M931.4,435.7h3.6v2.7h-3.6zM931.4,439.1h3.6v2.7h-3.6zM931.4,442.6h3.6v2.7h-3.6zM931.4,446.0h3.6v2.7h-3.6zM931.4,452.9h3.6v2.7h-3.6zM931.4,456.4h3.6v2.7h-3.6zM931.4,459.8h3.6v2.7h-3.6zM931.4,463.3h3.6v2.7h-3.6zM931.4,466.7h3.6v2.7h-3.6z" fill="#ababab"/>
<path d="M960.3,431.0h2.6v2.2h-2.6zM960.3,433.9h2.6v2.2h-2.6zM960.3,436.9h2.6v2.2h-2.6zM960.3,439.8h2.6v2.2h-2.6zM960.3,442.8h2.6v2.2h-2.6zM960.3,445.7h2.6v2.2h-2.6zM960.3,451.6h2.6v2.2h-2.6zM960.3,454.6h2.6v2.2h-2.6zM960.3,457.5h2.6v2.2h-2.6zM960.3,460.5h2.6v2.2h-2.6zM960.3,463.4h2.6v2.2h-2.6zM960.3,466.4h2.6v2.2h-2.6zM960.3,469.3h2.6v2.2h-2.6zM960.3,472.3h2.6v2.2h-2.6zM960.3,475.2h2.6v2.2h-2.6zM960.3,478.2h2.6v2.2h-2.6z" fill="#ababab"/>
<path d="M976.8,437.0h4.2v2.7h-4.2zM976.8,440.4h4.2v2.7h-4.2zM981.8,440.4h4.2v2.7h-4.2zM976.8,443.9h4.2v2.7h-4.2zM981.8,443.9h4.2v2.7h-4.2zM976.8,447.3h4.2v2.7h-4.2zM981.8,447.3h4.2v2.7h-4.2z" fill="#ababab"/>
<path d="M976.8,452.0h3.6v2.7h-3.6zM976.8,455.4h3.6v2.7h-3.6zM976.8,458.9h3.6v2.7h-3.6zM976.8,465.8h3.6v2.7h-3.6z" fill="#ababab"/>
<path d="M949.5,487.9h4.2v2.7h-4.2zM954.5,487.9h4.2v2.7h-4.2zM959.5,487.9h4.2v2.7h-4.2z" fill="#ababab"/>
<path d="M951.0,495.4h4.2v2.7h-4.2zM956.0,495.4h4.2v2.7h-4.2zM956.0,498.8h4.2v2.7h-4.2zM951.0,502.3h4.2v2.7h-4.2zM956.0,502.3h4.2v2.7h-4.2zM951.0,505.7h4.2v2.7h-4.2zM956.0,505.7h4.2v2.7h-4.2zM951.0,509.2h4.2v2.7h-4.2zM956.0,509.2h4.2v2.7h-4.2z" fill="#ababab"/>
<path d="M932.9,512.0h5.0v2.7h-5.0zM932.9,515.5h5.0v2.7h-5.0zM932.9,518.9h5.0v2.7h-5.0zM932.9,522.4h5.0v2.7h-5.0z" fill="#ababab"/>
<path d="M919.3,514.3h4.2v2.7h-4.2zM919.3,517.8h4.2v2.7h-4.2zM924.3,517.8h4.2v2.7h-4.2zM919.3,521.2h4.2v2.7h-4.2zM924.3,521.2h4.2v2.7h-4.2zM919.3,524.7h4.2v2.7h-4.2z" fill="#ababab"/>
<path d="M1013.6,439.5h5.0v3.4h-5.0zM1013.6,443.6h5.0v3.4h-5.0zM1007.8,447.8h5.0v3.4h-5.0zM1013.6,447.8h5.0v3.4h-5.0zM1007.8,451.9h5.0v3.4h-5.0zM1013.6,451.9h5.0v3.4h-5.0zM1013.6,456.1h5.0v3.4h-5.0z" fill="#ababab"/>
<path d="M1025.0,440.0h4.2v2.7h-4.2zM1030.0,440.0h4.2v2.7h-4.2zM1025.0,443.4h4.2v2.7h-4.2zM1025.0,446.9h4.2v2.7h-4.2zM1030.0,453.8h4.2v2.7h-4.2zM1025.0,457.2h4.2v2.7h-4.2zM1030.0,457.2h4.2v2.7h-4.2z" fill="#ababab"/>
<path d="M1006.3,469.0h2.6v4.0h-2.6zM1009.7,469.0h2.6v4.0h-2.6zM1013.1,469.0h2.6v4.0h-2.6zM1016.5,469.0h2.6v4.0h-2.6zM1006.3,473.8h2.6v4.0h-2.6zM1009.7,473.8h2.6v4.0h-2.6zM1013.1,473.8h2.6v4.0h-2.6zM1016.5,473.8h2.6v4.0h-2.6z" fill="#ababab"/>
<path d="M1047.0,463.0h4.2v2.7h-4.2zM1052.0,463.0h4.2v2.7h-4.2zM1047.0,466.4h4.2v2.7h-4.2zM1052.0,466.4h4.2v2.7h-4.2zM1047.0,469.9h4.2v2.7h-4.2zM1052.0,469.9h4.2v2.7h-4.2zM1047.0,473.3h4.2v2.7h-4.2zM1052.0,473.3h4.2v2.7h-4.2z" fill="#ababab"/>
<path d="M1037.3,482.6h2.6v4.4h-2.6zM1040.7,482.6h2.6v4.4h-2.6zM1044.1,482.6h2.6v4.4h-2.6zM1047.5,482.6h2.6v4.4h-2.6zM1050.9,482.6h2.6v4.4h-2.6zM1054.3,482.6h2.6v4.4h-2.6zM1040.7,487.8h2.6v4.4h-2.6zM1047.5,487.8h2.6v4.4h-2.6zM1050.9,487.8h2.6v4.4h-2.6zM1054.3,487.8h2.6v4.4h-2.6z" fill="#ababab"/>
<path d="M1066.0,432.6h4.2v2.7h-4.2zM1076.0,432.6h4.2v2.7h-4.2zM1081.0,432.6h4.2v2.7h-4.2zM1066.0,436.1h4.2v2.7h-4.2zM1076.0,436.1h4.2v2.7h-4.2zM1066.0,439.5h4.2v2.7h-4.2zM1071.0,439.5h4.2v2.7h-4.2zM1081.0,439.5h4.2v2.7h-4.2zM1066.0,442.9h4.2v2.7h-4.2zM1071.0,442.9h4.2v2.7h-4.2zM1076.0,442.9h4.2v2.7h-4.2zM1066.0,446.4h4.2v2.7h-4.2zM1081.0,446.4h4.2v2.7h-4.2zM1076.0,449.8h4.2v2.7h-4.2zM1081.0,449.8h4.2v2.7h-4.2zM1066.0,453.3h4.2v2.7h-4.2zM1071.0,453.3h4.2v2.7h-4.2zM1076.0,453.3h4.2v2.7h-4.2zM1081.0,453.3h4.2v2.7h-4.2zM1066.0,456.7h4.2v2.7h-4.2zM1071.0,456.7h4.2v2.7h-4.2zM1076.0,456.7h4.2v2.7h-4.2zM1081.0,456.7h4.2v2.7h-4.2zM1071.0,460.2h4.2v2.7h-4.2zM1081.0,460.2h4.2v2.7h-4.2zM1066.0,463.6h4.2v2.7h-4.2zM1071.0,463.6h4.2v2.7h-4.2zM1076.0,463.6h4.2v2.7h-4.2zM1081.0,463.6h4.2v2.7h-4.2z" fill="#ababab"/>
<path d="M811.0,546.0h4.2v2.7h-4.2zM821.0,546.0h4.2v2.7h-4.2zM826.0,546.0h4.2v2.7h-4.2zM841.0,546.0h4.2v2.7h-4.2zM851.0,546.0h4.2v2.7h-4.2zM856.0,546.0h4.2v2.7h-4.2zM861.0,546.0h4.2v2.7h-4.2zM806.0,549.5h4.2v2.7h-4.2zM811.0,549.5h4.2v2.7h-4.2zM816.0,549.5h4.2v2.7h-4.2zM821.0,549.5h4.2v2.7h-4.2zM836.0,549.5h4.2v2.7h-4.2zM841.0,549.5h4.2v2.7h-4.2zM846.0,549.5h4.2v2.7h-4.2zM856.0,549.5h4.2v2.7h-4.2zM861.0,549.5h4.2v2.7h-4.2zM806.0,552.9h4.2v2.7h-4.2zM811.0,552.9h4.2v2.7h-4.2zM816.0,552.9h4.2v2.7h-4.2zM821.0,552.9h4.2v2.7h-4.2zM831.0,552.9h4.2v2.7h-4.2zM846.0,552.9h4.2v2.7h-4.2zM851.0,552.9h4.2v2.7h-4.2zM856.0,552.9h4.2v2.7h-4.2zM811.0,556.4h4.2v2.7h-4.2zM816.0,556.4h4.2v2.7h-4.2zM821.0,556.4h4.2v2.7h-4.2zM826.0,556.4h4.2v2.7h-4.2zM831.0,556.4h4.2v2.7h-4.2zM836.0,556.4h4.2v2.7h-4.2zM841.0,556.4h4.2v2.7h-4.2zM846.0,556.4h4.2v2.7h-4.2zM851.0,556.4h4.2v2.7h-4.2zM811.0,559.8h4.2v2.7h-4.2zM816.0,559.8h4.2v2.7h-4.2zM826.0,559.8h4.2v2.7h-4.2zM831.0,559.8h4.2v2.7h-4.2zM836.0,559.8h4.2v2.7h-4.2zM841.0,559.8h4.2v2.7h-4.2zM846.0,559.8h4.2v2.7h-4.2zM861.0,559.8h4.2v2.7h-4.2zM806.0,563.3h4.2v2.7h-4.2zM816.0,563.3h4.2v2.7h-4.2zM821.0,563.3h4.2v2.7h-4.2zM831.0,563.3h4.2v2.7h-4.2zM836.0,563.3h4.2v2.7h-4.2zM841.0,563.3h4.2v2.7h-4.2zM846.0,563.3h4.2v2.7h-4.2zM851.0,563.3h4.2v2.7h-4.2zM856.0,563.3h4.2v2.7h-4.2zM806.0,566.7h4.2v2.7h-4.2zM811.0,566.7h4.2v2.7h-4.2zM816.0,566.7h4.2v2.7h-4.2zM821.0,566.7h4.2v2.7h-4.2zM826.0,566.7h4.2v2.7h-4.2zM831.0,566.7h4.2v2.7h-4.2zM836.0,566.7h4.2v2.7h-4.2zM841.0,566.7h4.2v2.7h-4.2zM856.0,566.7h4.2v2.7h-4.2zM861.0,566.7h4.2v2.7h-4.2zM811.0,570.2h4.2v2.7h-4.2zM816.0,570.2h4.2v2.7h-4.2zM821.0,570.2h4.2v2.7h-4.2zM826.0,570.2h4.2v2.7h-4.2zM831.0,570.2h4.2v2.7h-4.2zM836.0,570.2h4.2v2.7h-4.2zM846.0,570.2h4.2v2.7h-4.2zM851.0,570.2h4.2v2.7h-4.2zM856.0,570.2h4.2v2.7h-4.2zM861.0,570.2h4.2v2.7h-4.2zM806.0,573.6h4.2v2.7h-4.2zM816.0,573.6h4.2v2.7h-4.2zM821.0,573.6h4.2v2.7h-4.2zM826.0,573.6h4.2v2.7h-4.2zM831.0,573.6h4.2v2.7h-4.2zM836.0,573.6h4.2v2.7h-4.2zM841.0,573.6h4.2v2.7h-4.2zM846.0,573.6h4.2v2.7h-4.2zM851.0,573.6h4.2v2.7h-4.2zM856.0,573.6h4.2v2.7h-4.2zM861.0,573.6h4.2v2.7h-4.2zM821.0,577.1h4.2v2.7h-4.2zM826.0,577.1h4.2v2.7h-4.2zM831.0,577.1h4.2v2.7h-4.2zM836.0,577.1h4.2v2.7h-4.2zM841.0,577.1h4.2v2.7h-4.2zM846.0,577.1h4.2v2.7h-4.2zM851.0,577.1h4.2v2.7h-4.2zM811.0,580.5h4.2v2.7h-4.2zM816.0,580.5h4.2v2.7h-4.2zM821.0,580.5h4.2v2.7h-4.2zM831.0,580.5h4.2v2.7h-4.2zM841.0,580.5h4.2v2.7h-4.2zM846.0,580.5h4.2v2.7h-4.2zM851.0,580.5h4.2v2.7h-4.2zM856.0,580.5h4.2v2.7h-4.2zM861.0,580.5h4.2v2.7h-4.2zM806.0,584.0h4.2v2.7h-4.2zM831.0,584.0h4.2v2.7h-4.2zM836.0,584.0h4.2v2.7h-4.2zM841.0,584.0h4.2v2.7h-4.2zM846.0,584.0h4.2v2.7h-4.2zM861.0,584.0h4.2v2.7h-4.2zM806.0,587.4h4.2v2.7h-4.2zM816.0,587.4h4.2v2.7h-4.2zM826.0,587.4h4.2v2.7h-4.2zM841.0,587.4h4.2v2.7h-4.2zM846.0,587.4h4.2v2.7h-4.2zM861.0,587.4h4.2v2.7h-4.2z" fill="#ababab"/>
<path d="M806.0,592.0h6.0v4.0h-6.0zM812.8,592.0h6.0v4.0h-6.0zM819.6,592.0h6.0v4.0h-6.0zM806.0,596.8h6.0v4.0h-6.0zM812.8,596.8h6.0v4.0h-6.0zM819.6,596.8h6.0v4.0h-6.0zM812.8,601.5h6.0v4.0h-6.0zM819.6,601.5h6.0v4.0h-6.0zM812.8,606.2h6.0v4.0h-6.0zM819.6,606.2h6.0v4.0h-6.0zM806.0,611.0h6.0v4.0h-6.0zM812.8,611.0h6.0v4.0h-6.0zM819.6,611.0h6.0v4.0h-6.0zM806.0,615.8h6.0v4.0h-6.0zM812.8,615.8h6.0v4.0h-6.0zM819.6,615.8h6.0v4.0h-6.0z" fill="#ababab"/>
<path d="M832.3,596.0h5.5v3.6h-5.5zM844.9,596.0h5.5v3.6h-5.5zM826.0,600.4h5.5v3.6h-5.5zM832.3,600.4h5.5v3.6h-5.5zM838.6,600.4h5.5v3.6h-5.5zM844.9,600.4h5.5v3.6h-5.5zM851.2,600.4h5.5v3.6h-5.5zM826.0,604.7h5.5v3.6h-5.5zM832.3,604.7h5.5v3.6h-5.5zM838.6,604.7h5.5v3.6h-5.5zM844.9,604.7h5.5v3.6h-5.5zM851.2,604.7h5.5v3.6h-5.5zM826.0,609.1h5.5v3.6h-5.5zM832.3,609.1h5.5v3.6h-5.5zM838.6,609.1h5.5v3.6h-5.5zM851.2,609.1h5.5v3.6h-5.5zM826.0,613.4h5.5v3.6h-5.5zM832.3,613.4h5.5v3.6h-5.5zM844.9,613.4h5.5v3.6h-5.5zM851.2,613.4h5.5v3.6h-5.5z" fill="#ababab"/>
<path d="M852.0,592.0h4.2v2.7h-4.2zM842.0,595.5h4.2v2.7h-4.2zM847.0,595.5h4.2v2.7h-4.2zM852.0,595.5h4.2v2.7h-4.2zM842.0,598.9h4.2v2.7h-4.2zM852.0,598.9h4.2v2.7h-4.2zM842.0,602.4h4.2v2.7h-4.2zM847.0,602.4h4.2v2.7h-4.2z" fill="#ababab"/>
<path d="M877.1,544.9h5.6v2.7h-5.6zM877.1,548.4h5.6v2.7h-5.6zM877.1,551.8h5.6v2.7h-5.6zM877.1,555.3h5.6v2.7h-5.6zM877.1,558.7h5.6v2.7h-5.6zM877.1,562.2h5.6v2.7h-5.6zM877.1,565.6h5.6v2.7h-5.6zM877.1,569.1h5.6v2.7h-5.6zM877.1,572.5h5.6v2.7h-5.6zM877.1,576.0h5.6v2.7h-5.6zM877.1,579.4h5.6v2.7h-5.6zM877.1,582.9h5.6v2.7h-5.6zM877.1,586.3h5.6v2.7h-5.6z" fill="#ababab"/>
<path d="M908.7,544.9h4.2v2.7h-4.2zM913.7,544.9h4.2v2.7h-4.2zM908.7,548.4h4.2v2.7h-4.2zM913.7,548.4h4.2v2.7h-4.2zM908.7,551.8h4.2v2.7h-4.2zM913.7,551.8h4.2v2.7h-4.2zM908.7,555.3h4.2v2.7h-4.2zM913.7,555.3h4.2v2.7h-4.2zM908.7,558.7h4.2v2.7h-4.2zM913.7,562.2h4.2v2.7h-4.2zM908.7,565.6h4.2v2.7h-4.2zM913.7,565.6h4.2v2.7h-4.2zM908.7,569.1h4.2v2.7h-4.2z" fill="#ababab"/>
<path d="M886.0,581.2h4.2v2.7h-4.2zM891.0,581.2h4.2v2.7h-4.2zM896.0,581.2h4.2v2.7h-4.2zM901.0,581.2h4.2v2.7h-4.2z" fill="#ababab"/>
<path d="M890.5,587.3h4.2v2.7h-4.2zM895.5,587.3h4.2v2.7h-4.2zM900.5,587.3h4.2v2.7h-4.2zM905.5,587.3h4.2v2.7h-4.2z" fill="#ababab"/>
<path d="M892.8,591.8h4.2v2.7h-4.2zM897.8,591.8h4.2v2.7h-4.2zM902.8,591.8h4.2v2.7h-4.2zM907.8,591.8h4.2v2.7h-4.2zM912.8,591.8h4.2v2.7h-4.2zM892.8,595.2h4.2v2.7h-4.2zM897.8,595.2h4.2v2.7h-4.2zM907.8,595.2h4.2v2.7h-4.2zM892.8,598.7h4.2v2.7h-4.2zM897.8,598.7h4.2v2.7h-4.2zM907.8,598.7h4.2v2.7h-4.2zM892.8,602.2h4.2v2.7h-4.2zM897.8,602.2h4.2v2.7h-4.2zM902.8,602.2h4.2v2.7h-4.2z" fill="#ababab"/>
<path d="M969.7,543.4h4.2v2.7h-4.2zM964.7,546.9h4.2v2.7h-4.2zM969.7,546.9h4.2v2.7h-4.2zM974.7,546.9h4.2v2.7h-4.2zM964.7,550.3h4.2v2.7h-4.2zM969.7,550.3h4.2v2.7h-4.2zM974.7,550.3h4.2v2.7h-4.2zM969.7,553.8h4.2v2.7h-4.2zM974.7,553.8h4.2v2.7h-4.2zM964.7,557.2h4.2v2.7h-4.2zM969.7,557.2h4.2v2.7h-4.2zM974.7,557.2h4.2v2.7h-4.2z" fill="#ababab"/>
<path d="M948.0,571.0h4.2v2.7h-4.2zM953.0,571.0h4.2v2.7h-4.2zM948.0,574.5h4.2v2.7h-4.2zM953.0,574.5h4.2v2.7h-4.2zM953.0,577.9h4.2v2.7h-4.2zM948.0,581.4h4.2v2.7h-4.2zM953.0,581.4h4.2v2.7h-4.2zM948.0,584.8h4.2v2.7h-4.2zM953.0,584.8h4.2v2.7h-4.2zM948.0,588.3h4.2v2.7h-4.2zM953.0,588.3h4.2v2.7h-4.2z" fill="#ababab"/>
<path d="M966.6,565.3h2.6v4.2h-2.6zM970.0,565.3h2.6v4.2h-2.6zM976.8,565.3h2.6v4.2h-2.6zM980.2,565.3h2.6v4.2h-2.6zM983.6,565.3h2.6v4.2h-2.6zM966.6,570.2h2.6v4.2h-2.6zM970.0,570.2h2.6v4.2h-2.6zM973.4,570.2h2.6v4.2h-2.6zM976.8,570.2h2.6v4.2h-2.6zM980.2,570.2h2.6v4.2h-2.6zM983.6,570.2h2.6v4.2h-2.6zM963.2,575.2h2.6v4.2h-2.6zM966.6,575.2h2.6v4.2h-2.6zM970.0,575.2h2.6v4.2h-2.6zM973.4,575.2h2.6v4.2h-2.6zM976.8,575.2h2.6v4.2h-2.6zM983.6,575.2h2.6v4.2h-2.6zM963.2,580.2h2.6v4.2h-2.6zM966.6,580.2h2.6v4.2h-2.6zM973.4,580.2h2.6v4.2h-2.6zM976.8,580.2h2.6v4.2h-2.6zM980.2,580.2h2.6v4.2h-2.6zM983.6,580.2h2.6v4.2h-2.6zM966.6,585.1h2.6v4.2h-2.6zM970.0,585.1h2.6v4.2h-2.6zM973.4,585.1h2.6v4.2h-2.6zM980.2,585.1h2.6v4.2h-2.6zM963.2,590.1h2.6v4.2h-2.6zM966.6,590.1h2.6v4.2h-2.6zM970.0,590.1h2.6v4.2h-2.6zM973.4,590.1h2.6v4.2h-2.6zM980.2,590.1h2.6v4.2h-2.6zM983.6,590.1h2.6v4.2h-2.6zM963.2,595.0h2.6v4.2h-2.6zM966.6,595.0h2.6v4.2h-2.6zM970.0,595.0h2.6v4.2h-2.6zM973.4,595.0h2.6v4.2h-2.6zM980.2,595.0h2.6v4.2h-2.6zM983.6,595.0h2.6v4.2h-2.6z" fill="#ababab"/>
<path d="M953.3,592.6h4.2v2.7h-4.2zM958.3,592.6h4.2v2.7h-4.2zM963.3,592.6h4.2v2.7h-4.2zM953.3,596.1h4.2v2.7h-4.2zM958.3,596.1h4.2v2.7h-4.2zM963.3,596.1h4.2v2.7h-4.2z" fill="#ababab"/>
<path d="M840.5,648.5h4.2v2.7h-4.2zM845.5,648.5h4.2v2.7h-4.2zM850.5,648.5h4.2v2.7h-4.2zM855.5,648.5h4.2v2.7h-4.2zM860.5,648.5h4.2v2.7h-4.2zM840.5,652.0h4.2v2.7h-4.2zM845.5,652.0h4.2v2.7h-4.2zM850.5,652.0h4.2v2.7h-4.2zM855.5,652.0h4.2v2.7h-4.2zM860.5,652.0h4.2v2.7h-4.2zM845.5,655.4h4.2v2.7h-4.2zM850.5,655.4h4.2v2.7h-4.2zM855.5,655.4h4.2v2.7h-4.2zM860.5,655.4h4.2v2.7h-4.2zM840.5,658.9h4.2v2.7h-4.2zM845.5,658.9h4.2v2.7h-4.2zM855.5,658.9h4.2v2.7h-4.2zM845.5,662.3h4.2v2.7h-4.2zM850.5,662.3h4.2v2.7h-4.2zM855.5,662.3h4.2v2.7h-4.2zM860.5,662.3h4.2v2.7h-4.2zM840.5,665.8h4.2v2.7h-4.2zM845.5,665.8h4.2v2.7h-4.2zM855.5,665.8h4.2v2.7h-4.2zM840.5,669.2h4.2v2.7h-4.2zM855.5,669.2h4.2v2.7h-4.2zM840.5,672.7h4.2v2.7h-4.2zM845.5,672.7h4.2v2.7h-4.2zM850.5,672.7h4.2v2.7h-4.2zM855.5,672.7h4.2v2.7h-4.2zM840.5,676.1h4.2v2.7h-4.2zM855.5,676.1h4.2v2.7h-4.2zM860.5,676.1h4.2v2.7h-4.2z" fill="#ababab"/>
<path d="M874.8,666.7h4.2v2.7h-4.2zM874.8,670.2h4.2v2.7h-4.2zM879.8,670.2h4.2v2.7h-4.2zM874.8,673.6h4.2v2.7h-4.2zM879.8,673.6h4.2v2.7h-4.2zM874.8,677.1h4.2v2.7h-4.2zM879.8,677.1h4.2v2.7h-4.2zM879.8,680.5h4.2v2.7h-4.2z" fill="#ababab"/>
<path d="M848.5,636.0h3.0v2.7h-3.0zM848.5,639.5h3.0v2.7h-3.0zM848.5,642.9h3.0v2.7h-3.0z" fill="#ababab"/>
<path d="M949.5,628.5h4.2v2.7h-4.2zM959.5,628.5h4.2v2.7h-4.2zM964.5,628.5h4.2v2.7h-4.2zM974.5,628.5h4.2v2.7h-4.2zM959.5,632.0h4.2v2.7h-4.2zM964.5,632.0h4.2v2.7h-4.2zM969.5,632.0h4.2v2.7h-4.2zM979.5,632.0h4.2v2.7h-4.2zM949.5,635.4h4.2v2.7h-4.2zM954.5,635.4h4.2v2.7h-4.2zM964.5,635.4h4.2v2.7h-4.2zM969.5,635.4h4.2v2.7h-4.2zM974.5,635.4h4.2v2.7h-4.2zM979.5,635.4h4.2v2.7h-4.2zM949.5,638.9h4.2v2.7h-4.2zM959.5,638.9h4.2v2.7h-4.2zM964.5,638.9h4.2v2.7h-4.2zM969.5,638.9h4.2v2.7h-4.2zM974.5,638.9h4.2v2.7h-4.2zM949.5,642.3h4.2v2.7h-4.2zM959.5,642.3h4.2v2.7h-4.2zM964.5,642.3h4.2v2.7h-4.2zM969.5,642.3h4.2v2.7h-4.2zM979.5,642.3h4.2v2.7h-4.2zM949.5,645.8h4.2v2.7h-4.2zM954.5,645.8h4.2v2.7h-4.2zM959.5,645.8h4.2v2.7h-4.2zM964.5,645.8h4.2v2.7h-4.2zM969.5,645.8h4.2v2.7h-4.2zM974.5,645.8h4.2v2.7h-4.2zM979.5,645.8h4.2v2.7h-4.2zM949.5,649.2h4.2v2.7h-4.2zM959.5,649.2h4.2v2.7h-4.2zM964.5,649.2h4.2v2.7h-4.2zM969.5,649.2h4.2v2.7h-4.2zM974.5,649.2h4.2v2.7h-4.2zM954.5,652.7h4.2v2.7h-4.2zM959.5,652.7h4.2v2.7h-4.2zM964.5,652.7h4.2v2.7h-4.2zM969.5,652.7h4.2v2.7h-4.2zM974.5,652.7h4.2v2.7h-4.2z" fill="#ababab"/>
<path d="M992.0,631.0h5.0v4.0h-5.0zM997.8,631.0h5.0v4.0h-5.0zM992.0,635.8h5.0v4.0h-5.0zM997.8,635.8h5.0v4.0h-5.0zM997.8,640.5h5.0v4.0h-5.0zM992.0,645.2h5.0v4.0h-5.0zM997.8,645.2h5.0v4.0h-5.0z" fill="#ababab"/>
<path d="M1010.0,629.0h5.0v4.0h-5.0zM1015.8,629.0h5.0v4.0h-5.0zM1021.6,629.0h5.0v4.0h-5.0zM1027.4,629.0h5.0v4.0h-5.0zM1033.2,629.0h5.0v4.0h-5.0zM1010.0,633.8h5.0v4.0h-5.0zM1015.8,633.8h5.0v4.0h-5.0zM1021.6,633.8h5.0v4.0h-5.0zM1027.4,633.8h5.0v4.0h-5.0zM1010.0,638.5h5.0v4.0h-5.0zM1015.8,638.5h5.0v4.0h-5.0zM1021.6,638.5h5.0v4.0h-5.0zM1027.4,638.5h5.0v4.0h-5.0zM1015.8,643.2h5.0v4.0h-5.0zM1021.6,643.2h5.0v4.0h-5.0zM1027.4,643.2h5.0v4.0h-5.0zM1033.2,643.2h5.0v4.0h-5.0zM1015.8,648.0h5.0v4.0h-5.0zM1021.6,648.0h5.0v4.0h-5.0zM1027.4,648.0h5.0v4.0h-5.0zM1010.0,652.8h5.0v4.0h-5.0zM1015.8,652.8h5.0v4.0h-5.0zM1021.6,652.8h5.0v4.0h-5.0zM1027.4,652.8h5.0v4.0h-5.0zM1033.2,652.8h5.0v4.0h-5.0z" fill="#ababab"/>
<path d="M907.9,663.7h2.8v5.6h-2.8zM911.5,663.7h2.8v5.6h-2.8zM915.1,663.7h2.8v5.6h-2.8zM918.7,663.7h2.8v5.6h-2.8zM922.3,663.7h2.8v5.6h-2.8zM925.9,663.7h2.8v5.6h-2.8zM929.5,663.7h2.8v5.6h-2.8zM933.1,663.7h2.8v5.6h-2.8z" fill="#ababab"/>
<path d="M907.9,672.0h4.2v2.7h-4.2zM912.9,672.0h4.2v2.7h-4.2zM917.9,672.0h4.2v2.7h-4.2zM922.9,672.0h4.2v2.7h-4.2zM927.9,672.0h4.2v2.7h-4.2zM932.9,672.0h4.2v2.7h-4.2z" fill="#ababab"/>
<path d="M940.5,663.7h2.6v5.6h-2.6z" fill="#ababab"/>
<path d="M945.0,665.6h4.2v2.7h-4.2zM950.0,665.6h4.2v2.7h-4.2zM955.0,665.6h4.2v2.7h-4.2zM960.0,665.6h4.2v2.7h-4.2z" fill="#ababab"/>
<path d="M973.8,666.4h4.2v2.7h-4.2z" fill="#ababab"/>
<path d="M960.0,695.4h4.2v2.7h-4.2zM965.0,695.4h4.2v2.7h-4.2zM975.0,695.4h4.2v2.7h-4.2z" fill="#ababab"/>
<path d="M1001.0,666.0h5.6v3.6h-5.6zM994.6,670.4h5.6v3.6h-5.6zM1001.0,670.4h5.6v3.6h-5.6zM994.6,674.7h5.6v3.6h-5.6zM1001.0,674.7h5.6v3.6h-5.6z" fill="#ababab"/>
<path d="M690.2,669.0h4.2v2.7h-4.2zM695.2,669.0h4.2v2.7h-4.2zM700.2,669.0h4.2v2.7h-4.2zM705.2,669.0h4.2v2.7h-4.2zM710.2,669.0h4.2v2.7h-4.2zM690.2,672.5h4.2v2.7h-4.2zM695.2,672.5h4.2v2.7h-4.2zM700.2,672.5h4.2v2.7h-4.2zM710.2,672.5h4.2v2.7h-4.2zM690.2,675.9h4.2v2.7h-4.2zM700.2,675.9h4.2v2.7h-4.2zM705.2,675.9h4.2v2.7h-4.2zM710.2,675.9h4.2v2.7h-4.2z" fill="#ababab"/>
<path d="" fill="#ababab"/>
<path d="M721.2,671.2h7.0v3.0h-7.0zM721.2,675.0h7.0v3.0h-7.0zM721.2,682.5h7.0v3.0h-7.0zM721.2,686.2h7.0v3.0h-7.0zM721.2,690.0h7.0v3.0h-7.0zM721.2,693.7h7.0v3.0h-7.0z" fill="#ababab"/>
<path d="M737.9,667.4h5.0v2.4h-5.0zM743.7,667.4h5.0v2.4h-5.0zM749.5,667.4h5.0v2.4h-5.0zM755.3,667.4h5.0v2.4h-5.0zM761.1,667.4h5.0v2.4h-5.0zM766.9,667.4h5.0v2.4h-5.0zM772.7,667.4h5.0v2.4h-5.0zM778.5,667.4h5.0v2.4h-5.0zM784.3,667.4h5.0v2.4h-5.0z" fill="#ababab"/>
<path d="M752.2,696.2h4.2v2.7h-4.2zM757.2,696.2h4.2v2.7h-4.2zM762.2,696.2h4.2v2.7h-4.2zM767.2,696.2h4.2v2.7h-4.2z" fill="#ababab"/>
<path d="M789.3,669.0h4.2v2.7h-4.2zM789.3,672.5h4.2v2.7h-4.2zM794.3,672.5h4.2v2.7h-4.2zM789.3,675.9h4.2v2.7h-4.2zM794.3,675.9h4.2v2.7h-4.2z" fill="#ababab"/>
<path d="M789.3,684.1h4.2v2.7h-4.2zM789.3,687.6h4.2v2.7h-4.2zM789.3,691.0h4.2v2.7h-4.2z" fill="#ababab"/>
<defs><pattern id="bga" width="3" height="3" patternUnits="userSpaceOnUse"><rect width="3" height="3" fill="#e6e6e6"/><circle cx="1.5" cy="1.5" r="1.05" fill="#9c9c9c"/></pattern><pattern id="bga2" width="3.2" height="3.2" patternUnits="userSpaceOnUse"><rect width="3.2" height="3.2" fill="#f2f2f2"/><rect x=".6" y=".6" width="2" height="2" fill="#b8b8b8"/></pattern></defs>
<rect x="803.4" y="465.2" width="21.5" height="20.7" fill="url(#bga)"/>
<rect x="1022.6" y="464.4" width="18" height="16.2" fill="url(#bga2)" stroke="#c8c8c8" stroke-width=".7"/>
<rect x="967" y="546.5" width="11" height="11" fill="url(#bga2)"/>
<g transform="rotate(45 1082 629.6)"><rect x="1075" y="622.6" width="14" height="14" fill="#d8d8d8"/><path d="M1075,626V622.6H1089V626M1075,633.5V636.6H1089V633.5" stroke="#000" stroke-width="1" fill="none"/><rect x="1077.5" y="625" width="9" height="9" fill="#c4c4c4"/></g>
<g transform="rotate(45 1070 636)"><path d="M1056.0,632.0h4.2v2.7h-4.2zM1061.0,632.0h4.2v2.7h-4.2zM1066.0,632.0h4.2v2.7h-4.2zM1071.0,632.0h4.2v2.7h-4.2zM1076.0,632.0h4.2v2.7h-4.2zM1056.0,635.5h4.2v2.7h-4.2zM1061.0,635.5h4.2v2.7h-4.2zM1066.0,635.5h4.2v2.7h-4.2zM1071.0,635.5h4.2v2.7h-4.2zM1076.0,635.5h4.2v2.7h-4.2z" fill="#ababab"/></g>
<g transform="rotate(45 1063.8 663.7)"><rect x="1057.3" y="657.2" width="13" height="13" fill="#c6c6c6"/><rect x="1054.8" y="660.2" width="18" height="7" fill="#c6c6c6"/><rect x="1060.3" y="654.7" width="7" height="18" fill="#c6c6c6"/><circle cx="1063.8" cy="663.7" r="3.3" fill="#ececec" stroke="#aaa" stroke-width=".6"/></g>
</g>
<g fill="none" stroke="#b0b0b0" stroke-width=".8">
<rect x="694.4" y="507.2" width="83.6" height="66.2"/>
<rect x="1009.3" y="543.4" width="84.3" height="65.8"/>
<rect x="754.5" y="582.7" width="41.2" height="74.9"/>
<rect x="735.6" y="671.2" width="52.2" height="23.5" rx="2"/>
<rect x="940.2" y="673.2" width="50.2" height="19.2" rx="3"/>
<rect x="937.4" y="427.3" width="22" height="59.1"/>
<rect x="804.4" y="318.8" width="13.4" height="13.2"/>
<circle cx="686.4" cy="453.8" r="10"/>
<circle cx="1079.4" cy="674.3" r="9.8"/>
<rect x="868.8" y="623.6" width="6.8" height="6.5"/><rect x="867.2" y="641" width="6.8" height="6.8"/><rect x="1039.6" y="655" width="6.8" height="7"/><rect x="835.5" y="500.3" width="5.5" height="5.5"/><rect x="1056" y="496.5" width="7" height="7"/>
<rect x="763" y="594" width="6" height="6"/><rect x="763" y="637" width="6" height="6"/><rect x="772" y="586.5" width="5" height="5"/><rect x="779" y="586.5" width="5" height="5"/><rect x="786" y="586.5" width="5" height="5"/>
<circle cx="750.7" cy="651.1" r="1.6" stroke="#666"/>
</g>
<circle cx="811.0" cy="324.2" r="4.6" fill="#c6c6c6"/>
<g fill="none" stroke="#222" stroke-width=".85" stroke-linejoin="round">
<path d="M778.8,320.5Q778.8,319 780.3,319H795.2L797.6,315.2H824.1L826.8,318.5H1031.3Q1052,320.5 1066,325.2Q1069.8,326.5 1069.8,330V335.5Q1070.5,340.5 1076.5,340.8Q1079.7,341.2 1079.7,344.5V352.9Q1080.5,360.5 1087.2,362.9Q1092,364.8 1096,366.5Q1097.8,367.4 1097.8,369.5V414.5L1101.6,418.6V617.3L1104.6,620.6V666.3Q1104.6,669.7 1101.4,669.7H1092.5Q1090,669.9 1088.8,672A9.9,9.9 0 0 1 1079.6,684.3Q1073.6,685 1073.6,689.5V709.5Q1073.6,711 1072,711H1060Q1058.5,711 1058.5,709.5V686.4H1004.3V710.4Q1004.3,712 1002.7,712H998.5Q995.7,712 995.7,709.5Q995.7,707 993,706.8Q990,706.6 988.2,705.2Q986,703 983,703H928.7V698.7A7.1,7.1 0 0 0 914.4,698.7V706.8H858.5V698.8A7,7 0 0 0 844.5,698.8V706.8H822.6V700A9.85,9.85 0 0 0 802.9,700V706.8H796.9L793.9,703.8H730.3L727.3,706.8H711Q707.6,706.8 707.6,703.8V692.5Q707.3,685 700,684.7L687,683.6Q676.4,682 676.4,671V519.8L679.6,517.4V484L676.6,481.9V421.5L683.9,409V370Q684,367.4 687,367L697,364.3Q703,362.8 708,362.3Q710.6,361.8 710.6,359V340Q710.6,337.2 713.5,337L724.5,335.6Q727.3,335.2 727.3,332.5V328.5Q727.4,325 731,324.2L743.6,321.2V395.5Q743.6,398.2 746.5,398.4L757,399.3L770,398.7Q778.8,398.4 778.8,395.5Z"/>
<path d="M836,328.7H940.5Q942.7,328.7 942.7,331V371.8L955.6,387.7V411.5Q955.6,414.5 952.6,414.5H815.5Q812.5,414.5 812.5,411.5V393Q812.5,390 815.5,390H831Q834,390 834,387V331Q834,328.7 836,328.7Z"/>
<path d="M864.5,426.3H924Q930,426.3 930,432.3V481.1Q930,487.1 924,487.1H864.5Q858.5,487.1 858.5,481.1V432.3Q858.5,426.3 864.5,426.3Z"/>
<path d="M778,429.9H829.5Q833.6,429.9 833.6,434V452Q833.6,456 837.5,456.5Q843,457.5 843,463V502Q843,506 839,506H812Q806,506 804.3,500.5Q802,491.2 794,491.2H781.5Q775.2,491.2 775.2,485V433Q775.2,429.9 778,429.9Z"/>
<path d="M1007.8,434.2H1056.3Q1062.3,434.2 1062.3,440.2V497.5Q1062.3,501.5 1058.3,501.5H1041Q1034,501.5 1031.6,495Q1029,487.1 1021,487.1H1008Q1001.8,487.1 1001.8,481V440.2Q1001.8,434.2 1007.8,434.2Z"/>
<path d="M806.4,541.1H858.2L872.5,554.7V620.3Q872.5,626.3 866.5,626.3H806.4Q800.4,626.3 800.4,620.3V547.1Q800.4,541.1 806.4,541.1Z"/>
<path d="M842.7,643.2H863.3Q869.8,643.2 869.8,649.7V677.9Q869.8,684.4 863.3,684.4H842.7Q836.2,684.4 836.2,677.9V649.7Q836.2,643.2 842.7,643.2Z"/>
<path d="M951.7,623.7H1038.2Q1045.2,623.7 1045.2,630.7V653.6Q1045.2,660.6 1038.2,660.6H951.7Q944.7,660.6 944.7,653.6V630.7Q944.7,623.7 951.7,623.7Z"/>
<path d="M974.2,491.2H1028.5V532.2H974.2Z"/>
<circle cx="733.3" cy="448" r="29.5"/>
<circle cx="950.3" cy="611.5" r="10.1"/><path d="M940.2,611.5H960.4"/>
<path d="M959.0,357.5V352.6H965.4V357.5" stroke-width="1.3"/>
<path d="M972.4,357.5V352.6H978.8V357.5" stroke-width="1.3"/>
<path d="M985.8,357.5V352.6H992.1999999999999V357.5" stroke-width="1.3"/>
<path d="M805.7,662V656.8H815.3V662" stroke-width="1.4"/>
<path d="M819.0,662V656.8H828.6V662" stroke-width="1.4"/>
<path d="M693.4,371.4H690.8V379.0H693.4" stroke-width="1.3"/>
<path d="M1089.3,371.4H1091.9V379.0H1089.3" stroke-width="1.3"/>
<path d="M693.4,388.09999999999997H690.8V395.6H693.4" stroke-width="1.3"/>
<path d="M1089.3,388.09999999999997H1091.9V395.6H1089.3" stroke-width="1.3"/>
<path d="M711,405V402H722.8V405M711,413.5V416.3H722.8V413.5" stroke-width="1.1"/>
<path d="M1054.5,403.5V401H1067V403.5M1054.5,411.5V414H1067V411.5" stroke-width="1"/>
<rect x="941.5" y="514.7" width="20.6" height="16.8" stroke-width="1.3"/>
</g>
<g fill="#000"><circle cx="704.3" cy="368.3" r="1.5"/><circle cx="704.3" cy="385.1" r="1.5"/><circle cx="1077.4" cy="381.7" r="1.5"/><circle cx="1077.4" cy="398.3" r="1.5"/><circle cx="727.5" cy="362.8" r=".8"/><circle cx="803.2" cy="437.5" r=".8"/><circle cx="786.5" cy="478.8" r="1"/><circle cx="736.8" cy="672.6" r=".9"/><circle cx="960.5" cy="529.6" r=".9"/></g>
<text x="869.5" y="509" font-family="Liberation Sans" font-size="10.6" fill="#000" stroke="#000" stroke-width=".12" textLength="50.6" lengthAdjust="spacingAndGlyphs">88750_1_12</text>
<text x="984.3" y="509.3" font-family="Liberation Sans" font-size="10" fill="#b4b4b4" textLength="33.3" lengthAdjust="spacingAndGlyphs">SN-PCB</text>
<text x="996" y="517.5" font-family="Liberation Sans" font-size="5" fill="#cfcfcf">0 1 0</text>
</svg>
</div>
</body>
</html>
